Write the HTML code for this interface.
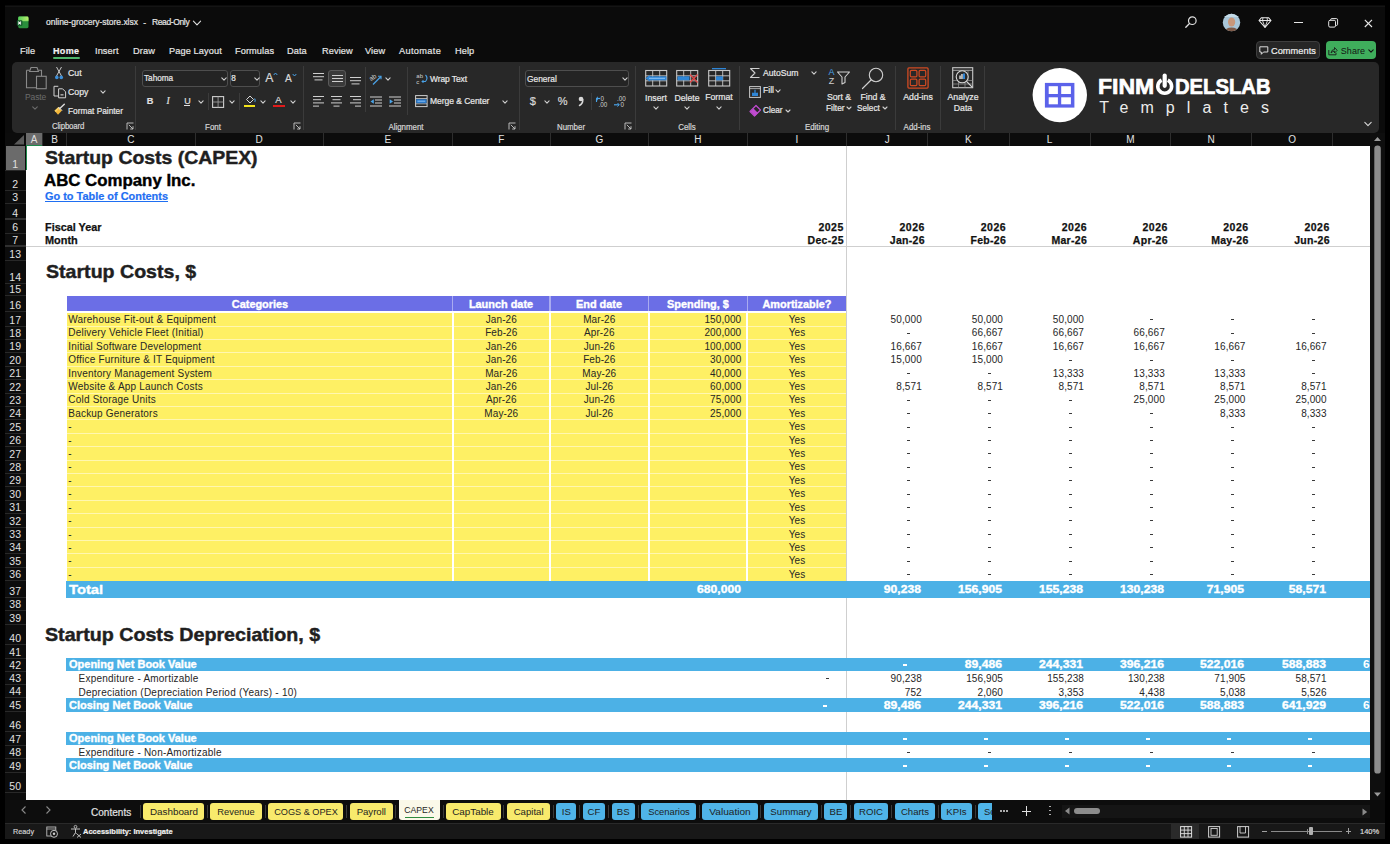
<!DOCTYPE html>
<html><head><meta charset="utf-8"><title>online-grocery-store.xlsx</title>
<style>
html,body{margin:0;padding:0;}
body{width:1390px;height:844px;overflow:hidden;background:#000;position:relative;font-family:"Liberation Sans", sans-serif;}
.t{position:absolute;white-space:nowrap;}
.r{position:absolute;}
.s{position:absolute;overflow:visible;}
</style></head><body>

<div class="r" style="left:5.00px;top:5.00px;width:1380.00px;height:834.00px;background:#0b0b0b;"></div>
<div class="r" style="left:25.50px;top:146.00px;width:1344.50px;height:654.00px;background:#ffffff;"></div>
<div class="r" style="left:25.5px;top:146px;width:1344.5px;height:654px;overflow:hidden;">
<div class="r" style="left:-25.5px;top:-146px;width:1390px;height:844px;">
<div class="r" style="left:846.10px;top:146.00px;width:1.00px;height:654.00px;background:#cfcfcf;"></div>
<div class="t" style="top:149.34px;font-size:18.5px;line-height:18.5px;color:#1f1f1f;transform:scaleX(1.0499);transform-origin:left center;font-weight:700;left:44.90px;-webkit-text-stroke:0.45px #1f1f1f;">Startup Costs (CAPEX)</div>
<div class="t" style="top:172.43px;font-size:16.5px;line-height:16.5px;color:#000;transform:scaleX(1.0193);transform-origin:left center;font-weight:700;left:44.30px;-webkit-text-stroke:0.4px #000;">ABC Company Inc.</div>
<div class="t" style="top:192.25px;font-size:10.1px;line-height:10.1px;color:#1f6ff2;transform:scaleX(1.0824);transform-origin:left center;font-weight:700;left:45.20px;text-decoration:underline;-webkit-text-stroke:0.2px #1f6ff2;">Go to Table of Contents</div>
<div class="t" style="top:221.61px;font-size:10.5px;line-height:10.5px;color:#111;transform:scaleX(1.0331);transform-origin:left center;font-weight:700;left:45.20px;-webkit-text-stroke:0.25px #111;">Fiscal Year</div>
<div class="t" style="top:234.91px;font-size:10.5px;line-height:10.5px;color:#111;transform:scaleX(1.0413);transform-origin:left center;font-weight:700;left:45.20px;-webkit-text-stroke:0.25px #111;">Month</div>
<div class="t" style="top:221.71px;font-size:10.5px;line-height:10.5px;color:#111;font-weight:700;letter-spacing:0.5px;left:443.80px;width:400px;text-align:right;-webkit-text-stroke:0.25px #111;">2025</div>
<div class="t" style="top:234.71px;font-size:10.5px;line-height:10.5px;color:#111;font-weight:700;letter-spacing:0.3px;left:443.80px;width:400px;text-align:right;-webkit-text-stroke:0.25px #111;">Dec-25</div>
<div class="t" style="top:221.71px;font-size:10.5px;line-height:10.5px;color:#111;font-weight:700;letter-spacing:0.5px;left:524.90px;width:400px;text-align:right;-webkit-text-stroke:0.25px #111;">2026</div>
<div class="t" style="top:234.71px;font-size:10.5px;line-height:10.5px;color:#111;font-weight:700;letter-spacing:0.3px;left:524.90px;width:400px;text-align:right;-webkit-text-stroke:0.25px #111;">Jan-26</div>
<div class="t" style="top:221.71px;font-size:10.5px;line-height:10.5px;color:#111;font-weight:700;letter-spacing:0.5px;left:606.10px;width:400px;text-align:right;-webkit-text-stroke:0.25px #111;">2026</div>
<div class="t" style="top:234.71px;font-size:10.5px;line-height:10.5px;color:#111;font-weight:700;letter-spacing:0.3px;left:606.10px;width:400px;text-align:right;-webkit-text-stroke:0.25px #111;">Feb-26</div>
<div class="t" style="top:221.71px;font-size:10.5px;line-height:10.5px;color:#111;font-weight:700;letter-spacing:0.5px;left:687.10px;width:400px;text-align:right;-webkit-text-stroke:0.25px #111;">2026</div>
<div class="t" style="top:234.71px;font-size:10.5px;line-height:10.5px;color:#111;font-weight:700;letter-spacing:0.3px;left:687.10px;width:400px;text-align:right;-webkit-text-stroke:0.25px #111;">Mar-26</div>
<div class="t" style="top:221.71px;font-size:10.5px;line-height:10.5px;color:#111;font-weight:700;letter-spacing:0.5px;left:767.90px;width:400px;text-align:right;-webkit-text-stroke:0.25px #111;">2026</div>
<div class="t" style="top:234.71px;font-size:10.5px;line-height:10.5px;color:#111;font-weight:700;letter-spacing:0.3px;left:767.90px;width:400px;text-align:right;-webkit-text-stroke:0.25px #111;">Apr-26</div>
<div class="t" style="top:221.71px;font-size:10.5px;line-height:10.5px;color:#111;font-weight:700;letter-spacing:0.5px;left:848.60px;width:400px;text-align:right;-webkit-text-stroke:0.25px #111;">2026</div>
<div class="t" style="top:234.71px;font-size:10.5px;line-height:10.5px;color:#111;font-weight:700;letter-spacing:0.3px;left:848.60px;width:400px;text-align:right;-webkit-text-stroke:0.25px #111;">May-26</div>
<div class="t" style="top:221.71px;font-size:10.5px;line-height:10.5px;color:#111;font-weight:700;letter-spacing:0.5px;left:929.80px;width:400px;text-align:right;-webkit-text-stroke:0.25px #111;">2026</div>
<div class="t" style="top:234.71px;font-size:10.5px;line-height:10.5px;color:#111;font-weight:700;letter-spacing:0.3px;left:929.80px;width:400px;text-align:right;-webkit-text-stroke:0.25px #111;">Jun-26</div>
<div class="r" style="left:25.50px;top:246.00px;width:1344.50px;height:1.00px;background:#cfcfcf;"></div>
<div class="t" style="top:262.84px;font-size:18.5px;line-height:18.5px;color:#1f1f1f;transform:scaleX(1.0588);transform-origin:left center;font-weight:700;left:45.80px;-webkit-text-stroke:0.45px #1f1f1f;">Startup Costs, $</div>
<div class="r" style="left:66.50px;top:295.60px;width:779.60px;height:15.10px;background:#6b6ee6;"></div>
<div class="r" style="left:451.90px;top:295.60px;width:1.40px;height:15.10px;background:#a9abf0;"></div>
<div class="r" style="left:549.30px;top:295.60px;width:1.40px;height:15.10px;background:#a9abf0;"></div>
<div class="r" style="left:647.90px;top:295.60px;width:1.40px;height:15.10px;background:#a9abf0;"></div>
<div class="r" style="left:746.60px;top:295.60px;width:1.40px;height:15.10px;background:#a9abf0;"></div>
<div class="r" style="left:66.50px;top:310.70px;width:779.60px;height:2.20px;background:#ffffff;"></div>
<div class="t" style="top:299.67px;font-size:10.2px;line-height:10.2px;color:#fff;transform:scaleX(1.0700);transform-origin:center center;font-weight:700;left:59.55px;width:400px;text-align:center;-webkit-text-stroke:0.35px #fff;">Categories</div>
<div class="t" style="top:299.67px;font-size:10.2px;line-height:10.2px;color:#fff;transform:scaleX(1.0700);transform-origin:center center;font-weight:700;left:301.30px;width:400px;text-align:center;-webkit-text-stroke:0.35px #fff;">Launch date</div>
<div class="t" style="top:299.67px;font-size:10.2px;line-height:10.2px;color:#fff;transform:scaleX(1.0700);transform-origin:center center;font-weight:700;left:399.30px;width:400px;text-align:center;-webkit-text-stroke:0.35px #fff;">End date</div>
<div class="t" style="top:299.67px;font-size:10.2px;line-height:10.2px;color:#fff;transform:scaleX(1.0700);transform-origin:center center;font-weight:700;left:497.95px;width:400px;text-align:center;-webkit-text-stroke:0.35px #fff;">Spending, $</div>
<div class="t" style="top:299.67px;font-size:10.2px;line-height:10.2px;color:#fff;transform:scaleX(1.0700);transform-origin:center center;font-weight:700;left:596.95px;width:400px;text-align:center;-webkit-text-stroke:0.35px #fff;">Amortizable?</div>
<div class="r" style="left:67.20px;top:312.90px;width:778.90px;height:267.90px;background:#fef064;"></div>
<div class="r" style="left:67.20px;top:325.51px;width:778.90px;height:1.00px;background:#fff7b0;"></div>
<div class="r" style="left:67.20px;top:338.92px;width:778.90px;height:1.00px;background:#fff7b0;"></div>
<div class="r" style="left:67.20px;top:352.33px;width:778.90px;height:1.00px;background:#fff7b0;"></div>
<div class="r" style="left:67.20px;top:365.74px;width:778.90px;height:1.00px;background:#fff7b0;"></div>
<div class="r" style="left:67.20px;top:379.15px;width:778.90px;height:1.00px;background:#fff7b0;"></div>
<div class="r" style="left:67.20px;top:392.56px;width:778.90px;height:1.00px;background:#fff7b0;"></div>
<div class="r" style="left:67.20px;top:405.97px;width:778.90px;height:1.00px;background:#fff7b0;"></div>
<div class="r" style="left:67.20px;top:419.38px;width:778.90px;height:1.00px;background:#fff7b0;"></div>
<div class="r" style="left:67.20px;top:432.79px;width:778.90px;height:1.00px;background:#fff7b0;"></div>
<div class="r" style="left:67.20px;top:446.20px;width:778.90px;height:1.00px;background:#fff7b0;"></div>
<div class="r" style="left:67.20px;top:459.61px;width:778.90px;height:1.00px;background:#fff7b0;"></div>
<div class="r" style="left:67.20px;top:473.02px;width:778.90px;height:1.00px;background:#fff7b0;"></div>
<div class="r" style="left:67.20px;top:486.43px;width:778.90px;height:1.00px;background:#fff7b0;"></div>
<div class="r" style="left:67.20px;top:499.84px;width:778.90px;height:1.00px;background:#fff7b0;"></div>
<div class="r" style="left:67.20px;top:513.25px;width:778.90px;height:1.00px;background:#fff7b0;"></div>
<div class="r" style="left:67.20px;top:526.66px;width:778.90px;height:1.00px;background:#fff7b0;"></div>
<div class="r" style="left:67.20px;top:540.07px;width:778.90px;height:1.00px;background:#fff7b0;"></div>
<div class="r" style="left:67.20px;top:553.48px;width:778.90px;height:1.00px;background:#fff7b0;"></div>
<div class="r" style="left:67.20px;top:566.89px;width:778.90px;height:1.00px;background:#fff7b0;"></div>
<div class="r" style="left:451.60px;top:312.90px;width:2.00px;height:267.90px;background:#ffffff;"></div>
<div class="r" style="left:549.00px;top:312.90px;width:2.00px;height:267.90px;background:#ffffff;"></div>
<div class="r" style="left:647.60px;top:312.90px;width:2.00px;height:267.90px;background:#ffffff;"></div>
<div class="r" style="left:746.30px;top:312.90px;width:2.00px;height:267.90px;background:#ffffff;"></div>
<div class="t" style="top:314.95px;font-size:10px;line-height:10px;color:#262626;letter-spacing:0.2px;left:68.30px;">Warehouse Fit-out &amp; Equipment</div>
<div class="t" style="top:314.95px;font-size:10px;line-height:10px;color:#262626;letter-spacing:0.1px;left:301.30px;width:400px;text-align:center;">Jan-26</div>
<div class="t" style="top:314.95px;font-size:10px;line-height:10px;color:#262626;letter-spacing:0.1px;left:399.30px;width:400px;text-align:center;">Mar-26</div>
<div class="t" style="top:314.95px;font-size:10px;line-height:10px;color:#262626;letter-spacing:0.1px;left:341.30px;width:400px;text-align:right;">150,000</div>
<div class="t" style="top:314.95px;font-size:10px;line-height:10px;color:#262626;letter-spacing:0.1px;left:596.95px;width:400px;text-align:center;">Yes</div>
<div class="t" style="top:314.95px;font-size:10px;line-height:10px;color:#262626;letter-spacing:0.1px;left:521.80px;width:400px;text-align:right;">50,000</div>
<div class="t" style="top:314.95px;font-size:10px;line-height:10px;color:#262626;letter-spacing:0.1px;left:603.00px;width:400px;text-align:right;">50,000</div>
<div class="t" style="top:314.95px;font-size:10px;line-height:10px;color:#262626;letter-spacing:0.1px;left:684.00px;width:400px;text-align:right;">50,000</div>
<div class="r" style="left:1150.00px;top:319.00px;width:3.00px;height:1.00px;background:#3a3a3a;"></div>
<div class="r" style="left:1231.00px;top:319.00px;width:3.00px;height:1.00px;background:#3a3a3a;"></div>
<div class="r" style="left:1312.00px;top:319.00px;width:3.00px;height:1.00px;background:#3a3a3a;"></div>
<div class="t" style="top:328.36px;font-size:10px;line-height:10px;color:#262626;letter-spacing:0.2px;left:68.30px;">Delivery Vehicle Fleet (Initial)</div>
<div class="t" style="top:328.36px;font-size:10px;line-height:10px;color:#262626;letter-spacing:0.1px;left:301.30px;width:400px;text-align:center;">Feb-26</div>
<div class="t" style="top:328.36px;font-size:10px;line-height:10px;color:#262626;letter-spacing:0.1px;left:399.30px;width:400px;text-align:center;">Apr-26</div>
<div class="t" style="top:328.36px;font-size:10px;line-height:10px;color:#262626;letter-spacing:0.1px;left:341.30px;width:400px;text-align:right;">200,000</div>
<div class="t" style="top:328.36px;font-size:10px;line-height:10px;color:#262626;letter-spacing:0.1px;left:596.95px;width:400px;text-align:center;">Yes</div>
<div class="r" style="left:907.00px;top:333.00px;width:3.00px;height:1.00px;background:#3a3a3a;"></div>
<div class="t" style="top:328.36px;font-size:10px;line-height:10px;color:#262626;letter-spacing:0.1px;left:603.00px;width:400px;text-align:right;">66,667</div>
<div class="t" style="top:328.36px;font-size:10px;line-height:10px;color:#262626;letter-spacing:0.1px;left:684.00px;width:400px;text-align:right;">66,667</div>
<div class="t" style="top:328.36px;font-size:10px;line-height:10px;color:#262626;letter-spacing:0.1px;left:764.80px;width:400px;text-align:right;">66,667</div>
<div class="r" style="left:1231.00px;top:333.00px;width:3.00px;height:1.00px;background:#3a3a3a;"></div>
<div class="r" style="left:1312.00px;top:333.00px;width:3.00px;height:1.00px;background:#3a3a3a;"></div>
<div class="t" style="top:341.77px;font-size:10px;line-height:10px;color:#262626;letter-spacing:0.2px;left:68.30px;">Initial Software Development</div>
<div class="t" style="top:341.77px;font-size:10px;line-height:10px;color:#262626;letter-spacing:0.1px;left:301.30px;width:400px;text-align:center;">Jan-26</div>
<div class="t" style="top:341.77px;font-size:10px;line-height:10px;color:#262626;letter-spacing:0.1px;left:399.30px;width:400px;text-align:center;">Jun-26</div>
<div class="t" style="top:341.77px;font-size:10px;line-height:10px;color:#262626;letter-spacing:0.1px;left:341.30px;width:400px;text-align:right;">100,000</div>
<div class="t" style="top:341.77px;font-size:10px;line-height:10px;color:#262626;letter-spacing:0.1px;left:596.95px;width:400px;text-align:center;">Yes</div>
<div class="t" style="top:341.77px;font-size:10px;line-height:10px;color:#262626;letter-spacing:0.1px;left:521.80px;width:400px;text-align:right;">16,667</div>
<div class="t" style="top:341.77px;font-size:10px;line-height:10px;color:#262626;letter-spacing:0.1px;left:603.00px;width:400px;text-align:right;">16,667</div>
<div class="t" style="top:341.77px;font-size:10px;line-height:10px;color:#262626;letter-spacing:0.1px;left:684.00px;width:400px;text-align:right;">16,667</div>
<div class="t" style="top:341.77px;font-size:10px;line-height:10px;color:#262626;letter-spacing:0.1px;left:764.80px;width:400px;text-align:right;">16,667</div>
<div class="t" style="top:341.77px;font-size:10px;line-height:10px;color:#262626;letter-spacing:0.1px;left:845.50px;width:400px;text-align:right;">16,667</div>
<div class="t" style="top:341.77px;font-size:10px;line-height:10px;color:#262626;letter-spacing:0.1px;left:926.70px;width:400px;text-align:right;">16,667</div>
<div class="t" style="top:355.18px;font-size:10px;line-height:10px;color:#262626;letter-spacing:0.2px;left:68.30px;">Office Furniture &amp; IT Equipment</div>
<div class="t" style="top:355.18px;font-size:10px;line-height:10px;color:#262626;letter-spacing:0.1px;left:301.30px;width:400px;text-align:center;">Jan-26</div>
<div class="t" style="top:355.18px;font-size:10px;line-height:10px;color:#262626;letter-spacing:0.1px;left:399.30px;width:400px;text-align:center;">Feb-26</div>
<div class="t" style="top:355.18px;font-size:10px;line-height:10px;color:#262626;letter-spacing:0.1px;left:341.30px;width:400px;text-align:right;">30,000</div>
<div class="t" style="top:355.18px;font-size:10px;line-height:10px;color:#262626;letter-spacing:0.1px;left:596.95px;width:400px;text-align:center;">Yes</div>
<div class="t" style="top:355.18px;font-size:10px;line-height:10px;color:#262626;letter-spacing:0.1px;left:521.80px;width:400px;text-align:right;">15,000</div>
<div class="t" style="top:355.18px;font-size:10px;line-height:10px;color:#262626;letter-spacing:0.1px;left:603.00px;width:400px;text-align:right;">15,000</div>
<div class="r" style="left:1069.00px;top:360.00px;width:3.00px;height:1.00px;background:#3a3a3a;"></div>
<div class="r" style="left:1150.00px;top:360.00px;width:3.00px;height:1.00px;background:#3a3a3a;"></div>
<div class="r" style="left:1231.00px;top:360.00px;width:3.00px;height:1.00px;background:#3a3a3a;"></div>
<div class="r" style="left:1312.00px;top:360.00px;width:3.00px;height:1.00px;background:#3a3a3a;"></div>
<div class="t" style="top:368.59px;font-size:10px;line-height:10px;color:#262626;letter-spacing:0.2px;left:68.30px;">Inventory Management System</div>
<div class="t" style="top:368.59px;font-size:10px;line-height:10px;color:#262626;letter-spacing:0.1px;left:301.30px;width:400px;text-align:center;">Mar-26</div>
<div class="t" style="top:368.59px;font-size:10px;line-height:10px;color:#262626;letter-spacing:0.1px;left:399.30px;width:400px;text-align:center;">May-26</div>
<div class="t" style="top:368.59px;font-size:10px;line-height:10px;color:#262626;letter-spacing:0.1px;left:341.30px;width:400px;text-align:right;">40,000</div>
<div class="t" style="top:368.59px;font-size:10px;line-height:10px;color:#262626;letter-spacing:0.1px;left:596.95px;width:400px;text-align:center;">Yes</div>
<div class="r" style="left:907.00px;top:373.00px;width:3.00px;height:1.00px;background:#3a3a3a;"></div>
<div class="r" style="left:988.00px;top:373.00px;width:3.00px;height:1.00px;background:#3a3a3a;"></div>
<div class="t" style="top:368.59px;font-size:10px;line-height:10px;color:#262626;letter-spacing:0.1px;left:684.00px;width:400px;text-align:right;">13,333</div>
<div class="t" style="top:368.59px;font-size:10px;line-height:10px;color:#262626;letter-spacing:0.1px;left:764.80px;width:400px;text-align:right;">13,333</div>
<div class="t" style="top:368.59px;font-size:10px;line-height:10px;color:#262626;letter-spacing:0.1px;left:845.50px;width:400px;text-align:right;">13,333</div>
<div class="r" style="left:1312.00px;top:373.00px;width:3.00px;height:1.00px;background:#3a3a3a;"></div>
<div class="t" style="top:382.00px;font-size:10px;line-height:10px;color:#262626;letter-spacing:0.2px;left:68.30px;">Website &amp; App Launch Costs</div>
<div class="t" style="top:382.00px;font-size:10px;line-height:10px;color:#262626;letter-spacing:0.1px;left:301.30px;width:400px;text-align:center;">Jan-26</div>
<div class="t" style="top:382.00px;font-size:10px;line-height:10px;color:#262626;letter-spacing:0.1px;left:399.30px;width:400px;text-align:center;">Jul-26</div>
<div class="t" style="top:382.00px;font-size:10px;line-height:10px;color:#262626;letter-spacing:0.1px;left:341.30px;width:400px;text-align:right;">60,000</div>
<div class="t" style="top:382.00px;font-size:10px;line-height:10px;color:#262626;letter-spacing:0.1px;left:596.95px;width:400px;text-align:center;">Yes</div>
<div class="t" style="top:382.00px;font-size:10px;line-height:10px;color:#262626;letter-spacing:0.1px;left:521.80px;width:400px;text-align:right;">8,571</div>
<div class="t" style="top:382.00px;font-size:10px;line-height:10px;color:#262626;letter-spacing:0.1px;left:603.00px;width:400px;text-align:right;">8,571</div>
<div class="t" style="top:382.00px;font-size:10px;line-height:10px;color:#262626;letter-spacing:0.1px;left:684.00px;width:400px;text-align:right;">8,571</div>
<div class="t" style="top:382.00px;font-size:10px;line-height:10px;color:#262626;letter-spacing:0.1px;left:764.80px;width:400px;text-align:right;">8,571</div>
<div class="t" style="top:382.00px;font-size:10px;line-height:10px;color:#262626;letter-spacing:0.1px;left:845.50px;width:400px;text-align:right;">8,571</div>
<div class="t" style="top:382.00px;font-size:10px;line-height:10px;color:#262626;letter-spacing:0.1px;left:926.70px;width:400px;text-align:right;">8,571</div>
<div class="t" style="top:395.41px;font-size:10px;line-height:10px;color:#262626;letter-spacing:0.2px;left:68.30px;">Cold Storage Units</div>
<div class="t" style="top:395.41px;font-size:10px;line-height:10px;color:#262626;letter-spacing:0.1px;left:301.30px;width:400px;text-align:center;">Apr-26</div>
<div class="t" style="top:395.41px;font-size:10px;line-height:10px;color:#262626;letter-spacing:0.1px;left:399.30px;width:400px;text-align:center;">Jun-26</div>
<div class="t" style="top:395.41px;font-size:10px;line-height:10px;color:#262626;letter-spacing:0.1px;left:341.30px;width:400px;text-align:right;">75,000</div>
<div class="t" style="top:395.41px;font-size:10px;line-height:10px;color:#262626;letter-spacing:0.1px;left:596.95px;width:400px;text-align:center;">Yes</div>
<div class="r" style="left:907.00px;top:400.00px;width:3.00px;height:1.00px;background:#3a3a3a;"></div>
<div class="r" style="left:988.00px;top:400.00px;width:3.00px;height:1.00px;background:#3a3a3a;"></div>
<div class="r" style="left:1069.00px;top:400.00px;width:3.00px;height:1.00px;background:#3a3a3a;"></div>
<div class="t" style="top:395.41px;font-size:10px;line-height:10px;color:#262626;letter-spacing:0.1px;left:764.80px;width:400px;text-align:right;">25,000</div>
<div class="t" style="top:395.41px;font-size:10px;line-height:10px;color:#262626;letter-spacing:0.1px;left:845.50px;width:400px;text-align:right;">25,000</div>
<div class="t" style="top:395.41px;font-size:10px;line-height:10px;color:#262626;letter-spacing:0.1px;left:926.70px;width:400px;text-align:right;">25,000</div>
<div class="t" style="top:408.81px;font-size:10px;line-height:10px;color:#262626;letter-spacing:0.2px;left:68.30px;">Backup Generators</div>
<div class="t" style="top:408.81px;font-size:10px;line-height:10px;color:#262626;letter-spacing:0.1px;left:301.30px;width:400px;text-align:center;">May-26</div>
<div class="t" style="top:408.81px;font-size:10px;line-height:10px;color:#262626;letter-spacing:0.1px;left:399.30px;width:400px;text-align:center;">Jul-26</div>
<div class="t" style="top:408.81px;font-size:10px;line-height:10px;color:#262626;letter-spacing:0.1px;left:341.30px;width:400px;text-align:right;">25,000</div>
<div class="t" style="top:408.81px;font-size:10px;line-height:10px;color:#262626;letter-spacing:0.1px;left:596.95px;width:400px;text-align:center;">Yes</div>
<div class="r" style="left:907.00px;top:413.00px;width:3.00px;height:1.00px;background:#3a3a3a;"></div>
<div class="r" style="left:988.00px;top:413.00px;width:3.00px;height:1.00px;background:#3a3a3a;"></div>
<div class="r" style="left:1069.00px;top:413.00px;width:3.00px;height:1.00px;background:#3a3a3a;"></div>
<div class="r" style="left:1150.00px;top:413.00px;width:3.00px;height:1.00px;background:#3a3a3a;"></div>
<div class="t" style="top:408.81px;font-size:10px;line-height:10px;color:#262626;letter-spacing:0.1px;left:845.50px;width:400px;text-align:right;">8,333</div>
<div class="t" style="top:408.81px;font-size:10px;line-height:10px;color:#262626;letter-spacing:0.1px;left:926.70px;width:400px;text-align:right;">8,333</div>
<div class="t" style="top:422.23px;font-size:10px;line-height:10px;color:#262626;letter-spacing:0.2px;left:68.30px;">-</div>
<div class="t" style="top:422.23px;font-size:10px;line-height:10px;color:#262626;letter-spacing:0.1px;left:596.95px;width:400px;text-align:center;">Yes</div>
<div class="r" style="left:907.00px;top:427.00px;width:3.00px;height:1.00px;background:#3a3a3a;"></div>
<div class="r" style="left:988.00px;top:427.00px;width:3.00px;height:1.00px;background:#3a3a3a;"></div>
<div class="r" style="left:1069.00px;top:427.00px;width:3.00px;height:1.00px;background:#3a3a3a;"></div>
<div class="r" style="left:1150.00px;top:427.00px;width:3.00px;height:1.00px;background:#3a3a3a;"></div>
<div class="r" style="left:1231.00px;top:427.00px;width:3.00px;height:1.00px;background:#3a3a3a;"></div>
<div class="r" style="left:1312.00px;top:427.00px;width:3.00px;height:1.00px;background:#3a3a3a;"></div>
<div class="t" style="top:435.64px;font-size:10px;line-height:10px;color:#262626;letter-spacing:0.2px;left:68.30px;">-</div>
<div class="t" style="top:435.64px;font-size:10px;line-height:10px;color:#262626;letter-spacing:0.1px;left:596.95px;width:400px;text-align:center;">Yes</div>
<div class="r" style="left:907.00px;top:440.00px;width:3.00px;height:1.00px;background:#3a3a3a;"></div>
<div class="r" style="left:988.00px;top:440.00px;width:3.00px;height:1.00px;background:#3a3a3a;"></div>
<div class="r" style="left:1069.00px;top:440.00px;width:3.00px;height:1.00px;background:#3a3a3a;"></div>
<div class="r" style="left:1150.00px;top:440.00px;width:3.00px;height:1.00px;background:#3a3a3a;"></div>
<div class="r" style="left:1231.00px;top:440.00px;width:3.00px;height:1.00px;background:#3a3a3a;"></div>
<div class="r" style="left:1312.00px;top:440.00px;width:3.00px;height:1.00px;background:#3a3a3a;"></div>
<div class="t" style="top:449.05px;font-size:10px;line-height:10px;color:#262626;letter-spacing:0.2px;left:68.30px;">-</div>
<div class="t" style="top:449.05px;font-size:10px;line-height:10px;color:#262626;letter-spacing:0.1px;left:596.95px;width:400px;text-align:center;">Yes</div>
<div class="r" style="left:907.00px;top:453.00px;width:3.00px;height:1.00px;background:#3a3a3a;"></div>
<div class="r" style="left:988.00px;top:453.00px;width:3.00px;height:1.00px;background:#3a3a3a;"></div>
<div class="r" style="left:1069.00px;top:453.00px;width:3.00px;height:1.00px;background:#3a3a3a;"></div>
<div class="r" style="left:1150.00px;top:453.00px;width:3.00px;height:1.00px;background:#3a3a3a;"></div>
<div class="r" style="left:1231.00px;top:453.00px;width:3.00px;height:1.00px;background:#3a3a3a;"></div>
<div class="r" style="left:1312.00px;top:453.00px;width:3.00px;height:1.00px;background:#3a3a3a;"></div>
<div class="t" style="top:462.46px;font-size:10px;line-height:10px;color:#262626;letter-spacing:0.2px;left:68.30px;">-</div>
<div class="t" style="top:462.46px;font-size:10px;line-height:10px;color:#262626;letter-spacing:0.1px;left:596.95px;width:400px;text-align:center;">Yes</div>
<div class="r" style="left:907.00px;top:467.00px;width:3.00px;height:1.00px;background:#3a3a3a;"></div>
<div class="r" style="left:988.00px;top:467.00px;width:3.00px;height:1.00px;background:#3a3a3a;"></div>
<div class="r" style="left:1069.00px;top:467.00px;width:3.00px;height:1.00px;background:#3a3a3a;"></div>
<div class="r" style="left:1150.00px;top:467.00px;width:3.00px;height:1.00px;background:#3a3a3a;"></div>
<div class="r" style="left:1231.00px;top:467.00px;width:3.00px;height:1.00px;background:#3a3a3a;"></div>
<div class="r" style="left:1312.00px;top:467.00px;width:3.00px;height:1.00px;background:#3a3a3a;"></div>
<div class="t" style="top:475.87px;font-size:10px;line-height:10px;color:#262626;letter-spacing:0.2px;left:68.30px;">-</div>
<div class="t" style="top:475.87px;font-size:10px;line-height:10px;color:#262626;letter-spacing:0.1px;left:596.95px;width:400px;text-align:center;">Yes</div>
<div class="r" style="left:907.00px;top:480.00px;width:3.00px;height:1.00px;background:#3a3a3a;"></div>
<div class="r" style="left:988.00px;top:480.00px;width:3.00px;height:1.00px;background:#3a3a3a;"></div>
<div class="r" style="left:1069.00px;top:480.00px;width:3.00px;height:1.00px;background:#3a3a3a;"></div>
<div class="r" style="left:1150.00px;top:480.00px;width:3.00px;height:1.00px;background:#3a3a3a;"></div>
<div class="r" style="left:1231.00px;top:480.00px;width:3.00px;height:1.00px;background:#3a3a3a;"></div>
<div class="r" style="left:1312.00px;top:480.00px;width:3.00px;height:1.00px;background:#3a3a3a;"></div>
<div class="t" style="top:489.28px;font-size:10px;line-height:10px;color:#262626;letter-spacing:0.2px;left:68.30px;">-</div>
<div class="t" style="top:489.28px;font-size:10px;line-height:10px;color:#262626;letter-spacing:0.1px;left:596.95px;width:400px;text-align:center;">Yes</div>
<div class="r" style="left:907.00px;top:494.00px;width:3.00px;height:1.00px;background:#3a3a3a;"></div>
<div class="r" style="left:988.00px;top:494.00px;width:3.00px;height:1.00px;background:#3a3a3a;"></div>
<div class="r" style="left:1069.00px;top:494.00px;width:3.00px;height:1.00px;background:#3a3a3a;"></div>
<div class="r" style="left:1150.00px;top:494.00px;width:3.00px;height:1.00px;background:#3a3a3a;"></div>
<div class="r" style="left:1231.00px;top:494.00px;width:3.00px;height:1.00px;background:#3a3a3a;"></div>
<div class="r" style="left:1312.00px;top:494.00px;width:3.00px;height:1.00px;background:#3a3a3a;"></div>
<div class="t" style="top:502.69px;font-size:10px;line-height:10px;color:#262626;letter-spacing:0.2px;left:68.30px;">-</div>
<div class="t" style="top:502.69px;font-size:10px;line-height:10px;color:#262626;letter-spacing:0.1px;left:596.95px;width:400px;text-align:center;">Yes</div>
<div class="r" style="left:907.00px;top:507.00px;width:3.00px;height:1.00px;background:#3a3a3a;"></div>
<div class="r" style="left:988.00px;top:507.00px;width:3.00px;height:1.00px;background:#3a3a3a;"></div>
<div class="r" style="left:1069.00px;top:507.00px;width:3.00px;height:1.00px;background:#3a3a3a;"></div>
<div class="r" style="left:1150.00px;top:507.00px;width:3.00px;height:1.00px;background:#3a3a3a;"></div>
<div class="r" style="left:1231.00px;top:507.00px;width:3.00px;height:1.00px;background:#3a3a3a;"></div>
<div class="r" style="left:1312.00px;top:507.00px;width:3.00px;height:1.00px;background:#3a3a3a;"></div>
<div class="t" style="top:516.10px;font-size:10px;line-height:10px;color:#262626;letter-spacing:0.2px;left:68.30px;">-</div>
<div class="t" style="top:516.10px;font-size:10px;line-height:10px;color:#262626;letter-spacing:0.1px;left:596.95px;width:400px;text-align:center;">Yes</div>
<div class="r" style="left:907.00px;top:520.00px;width:3.00px;height:1.00px;background:#3a3a3a;"></div>
<div class="r" style="left:988.00px;top:520.00px;width:3.00px;height:1.00px;background:#3a3a3a;"></div>
<div class="r" style="left:1069.00px;top:520.00px;width:3.00px;height:1.00px;background:#3a3a3a;"></div>
<div class="r" style="left:1150.00px;top:520.00px;width:3.00px;height:1.00px;background:#3a3a3a;"></div>
<div class="r" style="left:1231.00px;top:520.00px;width:3.00px;height:1.00px;background:#3a3a3a;"></div>
<div class="r" style="left:1312.00px;top:520.00px;width:3.00px;height:1.00px;background:#3a3a3a;"></div>
<div class="t" style="top:529.50px;font-size:10px;line-height:10px;color:#262626;letter-spacing:0.2px;left:68.30px;">-</div>
<div class="t" style="top:529.50px;font-size:10px;line-height:10px;color:#262626;letter-spacing:0.1px;left:596.95px;width:400px;text-align:center;">Yes</div>
<div class="r" style="left:907.00px;top:534.00px;width:3.00px;height:1.00px;background:#3a3a3a;"></div>
<div class="r" style="left:988.00px;top:534.00px;width:3.00px;height:1.00px;background:#3a3a3a;"></div>
<div class="r" style="left:1069.00px;top:534.00px;width:3.00px;height:1.00px;background:#3a3a3a;"></div>
<div class="r" style="left:1150.00px;top:534.00px;width:3.00px;height:1.00px;background:#3a3a3a;"></div>
<div class="r" style="left:1231.00px;top:534.00px;width:3.00px;height:1.00px;background:#3a3a3a;"></div>
<div class="r" style="left:1312.00px;top:534.00px;width:3.00px;height:1.00px;background:#3a3a3a;"></div>
<div class="t" style="top:542.91px;font-size:10px;line-height:10px;color:#262626;letter-spacing:0.2px;left:68.30px;">-</div>
<div class="t" style="top:542.91px;font-size:10px;line-height:10px;color:#262626;letter-spacing:0.1px;left:596.95px;width:400px;text-align:center;">Yes</div>
<div class="r" style="left:907.00px;top:547.00px;width:3.00px;height:1.00px;background:#3a3a3a;"></div>
<div class="r" style="left:988.00px;top:547.00px;width:3.00px;height:1.00px;background:#3a3a3a;"></div>
<div class="r" style="left:1069.00px;top:547.00px;width:3.00px;height:1.00px;background:#3a3a3a;"></div>
<div class="r" style="left:1150.00px;top:547.00px;width:3.00px;height:1.00px;background:#3a3a3a;"></div>
<div class="r" style="left:1231.00px;top:547.00px;width:3.00px;height:1.00px;background:#3a3a3a;"></div>
<div class="r" style="left:1312.00px;top:547.00px;width:3.00px;height:1.00px;background:#3a3a3a;"></div>
<div class="t" style="top:556.32px;font-size:10px;line-height:10px;color:#262626;letter-spacing:0.2px;left:68.30px;">-</div>
<div class="t" style="top:556.32px;font-size:10px;line-height:10px;color:#262626;letter-spacing:0.1px;left:596.95px;width:400px;text-align:center;">Yes</div>
<div class="r" style="left:907.00px;top:561.00px;width:3.00px;height:1.00px;background:#3a3a3a;"></div>
<div class="r" style="left:988.00px;top:561.00px;width:3.00px;height:1.00px;background:#3a3a3a;"></div>
<div class="r" style="left:1069.00px;top:561.00px;width:3.00px;height:1.00px;background:#3a3a3a;"></div>
<div class="r" style="left:1150.00px;top:561.00px;width:3.00px;height:1.00px;background:#3a3a3a;"></div>
<div class="r" style="left:1231.00px;top:561.00px;width:3.00px;height:1.00px;background:#3a3a3a;"></div>
<div class="r" style="left:1312.00px;top:561.00px;width:3.00px;height:1.00px;background:#3a3a3a;"></div>
<div class="t" style="top:569.73px;font-size:10px;line-height:10px;color:#262626;letter-spacing:0.2px;left:68.30px;">-</div>
<div class="t" style="top:569.73px;font-size:10px;line-height:10px;color:#262626;letter-spacing:0.1px;left:596.95px;width:400px;text-align:center;">Yes</div>
<div class="r" style="left:907.00px;top:574.00px;width:3.00px;height:1.00px;background:#3a3a3a;"></div>
<div class="r" style="left:988.00px;top:574.00px;width:3.00px;height:1.00px;background:#3a3a3a;"></div>
<div class="r" style="left:1069.00px;top:574.00px;width:3.00px;height:1.00px;background:#3a3a3a;"></div>
<div class="r" style="left:1150.00px;top:574.00px;width:3.00px;height:1.00px;background:#3a3a3a;"></div>
<div class="r" style="left:1231.00px;top:574.00px;width:3.00px;height:1.00px;background:#3a3a3a;"></div>
<div class="r" style="left:1312.00px;top:574.00px;width:3.00px;height:1.00px;background:#3a3a3a;"></div>
<div class="r" style="left:66.00px;top:580.80px;width:1304.00px;height:17.00px;background:#4cb1e6;"></div>
<div class="t" style="top:582.79px;font-size:13.6px;line-height:13.6px;color:#fff;transform:scaleX(1.0868);transform-origin:left center;font-weight:700;left:68.90px;-webkit-text-stroke:0.35px #fff;">Total</div>
<div class="t" style="top:584.68px;font-size:10.3px;line-height:10.3px;color:#fff;transform:scaleX(1.1800);transform-origin:right center;font-weight:700;left:340.90px;width:400px;text-align:right;-webkit-text-stroke:0.35px #fff;">680,000</div>
<div class="t" style="top:584.68px;font-size:10.3px;line-height:10.3px;color:#fff;transform:scaleX(1.1800);transform-origin:right center;font-weight:700;left:520.70px;width:400px;text-align:right;-webkit-text-stroke:0.35px #fff;">90,238</div>
<div class="t" style="top:584.68px;font-size:10.3px;line-height:10.3px;color:#fff;transform:scaleX(1.1800);transform-origin:right center;font-weight:700;left:601.90px;width:400px;text-align:right;-webkit-text-stroke:0.35px #fff;">156,905</div>
<div class="t" style="top:584.68px;font-size:10.3px;line-height:10.3px;color:#fff;transform:scaleX(1.1800);transform-origin:right center;font-weight:700;left:682.90px;width:400px;text-align:right;-webkit-text-stroke:0.35px #fff;">155,238</div>
<div class="t" style="top:584.68px;font-size:10.3px;line-height:10.3px;color:#fff;transform:scaleX(1.1800);transform-origin:right center;font-weight:700;left:763.70px;width:400px;text-align:right;-webkit-text-stroke:0.35px #fff;">130,238</div>
<div class="t" style="top:584.68px;font-size:10.3px;line-height:10.3px;color:#fff;transform:scaleX(1.1800);transform-origin:right center;font-weight:700;left:844.40px;width:400px;text-align:right;-webkit-text-stroke:0.35px #fff;">71,905</div>
<div class="t" style="top:584.68px;font-size:10.3px;line-height:10.3px;color:#fff;transform:scaleX(1.1800);transform-origin:right center;font-weight:700;left:925.60px;width:400px;text-align:right;-webkit-text-stroke:0.35px #fff;">58,571</div>
<div class="t" style="top:626.24px;font-size:18.5px;line-height:18.5px;color:#1f1f1f;transform:scaleX(1.0623);transform-origin:left center;font-weight:700;left:45.40px;-webkit-text-stroke:0.45px #1f1f1f;">Startup Costs Depreciation, $</div>
<div class="r" style="left:66.30px;top:658.00px;width:1303.70px;height:13.20px;background:#4cb1e6;"></div>
<div class="t" style="top:660.44px;font-size:10px;line-height:10px;color:#fff;transform:scaleX(1.1000);transform-origin:left center;font-weight:700;left:68.90px;-webkit-text-stroke:0.35px #fff;">Opening Net Book Value</div>
<div class="r" style="left:903.00px;top:664.00px;width:4.00px;height:1.60px;background:#fff;"></div>
<div class="t" style="top:660.18px;font-size:10.3px;line-height:10.3px;color:#fff;transform:scaleX(1.1800);transform-origin:right center;font-weight:700;left:601.90px;width:400px;text-align:right;-webkit-text-stroke:0.35px #fff;">89,486</div>
<div class="t" style="top:660.18px;font-size:10.3px;line-height:10.3px;color:#fff;transform:scaleX(1.1800);transform-origin:right center;font-weight:700;left:682.90px;width:400px;text-align:right;-webkit-text-stroke:0.35px #fff;">244,331</div>
<div class="t" style="top:660.18px;font-size:10.3px;line-height:10.3px;color:#fff;transform:scaleX(1.1800);transform-origin:right center;font-weight:700;left:763.70px;width:400px;text-align:right;-webkit-text-stroke:0.35px #fff;">396,216</div>
<div class="t" style="top:660.18px;font-size:10.3px;line-height:10.3px;color:#fff;transform:scaleX(1.1800);transform-origin:right center;font-weight:700;left:844.40px;width:400px;text-align:right;-webkit-text-stroke:0.35px #fff;">522,016</div>
<div class="t" style="top:660.18px;font-size:10.3px;line-height:10.3px;color:#fff;transform:scaleX(1.1800);transform-origin:right center;font-weight:700;left:925.60px;width:400px;text-align:right;-webkit-text-stroke:0.35px #fff;">588,883</div>
<div class="t" style="top:660.18px;font-size:10.3px;line-height:10.3px;color:#fff;transform:scaleX(1.1600);transform-origin:left center;font-weight:700;left:1362.60px;">6</div>
<div class="t" style="top:674.23px;font-size:10px;line-height:10px;color:#262626;letter-spacing:0.22px;left:78.60px;">Expenditure - Amortizable</div>
<div class="r" style="left:826.00px;top:678.00px;width:3.00px;height:1.00px;background:#3a3a3a;"></div>
<div class="t" style="top:674.23px;font-size:10px;line-height:10px;color:#262626;letter-spacing:0.1px;left:521.80px;width:400px;text-align:right;">90,238</div>
<div class="t" style="top:674.23px;font-size:10px;line-height:10px;color:#262626;letter-spacing:0.1px;left:603.00px;width:400px;text-align:right;">156,905</div>
<div class="t" style="top:674.23px;font-size:10px;line-height:10px;color:#262626;letter-spacing:0.1px;left:684.00px;width:400px;text-align:right;">155,238</div>
<div class="t" style="top:674.23px;font-size:10px;line-height:10px;color:#262626;letter-spacing:0.1px;left:764.80px;width:400px;text-align:right;">130,238</div>
<div class="t" style="top:674.23px;font-size:10px;line-height:10px;color:#262626;letter-spacing:0.1px;left:845.50px;width:400px;text-align:right;">71,905</div>
<div class="t" style="top:674.23px;font-size:10px;line-height:10px;color:#262626;letter-spacing:0.1px;left:926.70px;width:400px;text-align:right;">58,571</div>
<div class="t" style="top:687.63px;font-size:10px;line-height:10px;color:#262626;letter-spacing:0.22px;left:78.60px;">Depreciation (Depreciation Period (Years) - 10)</div>
<div class="t" style="top:687.63px;font-size:10px;line-height:10px;color:#262626;letter-spacing:0.1px;left:521.80px;width:400px;text-align:right;">752</div>
<div class="t" style="top:687.63px;font-size:10px;line-height:10px;color:#262626;letter-spacing:0.1px;left:603.00px;width:400px;text-align:right;">2,060</div>
<div class="t" style="top:687.63px;font-size:10px;line-height:10px;color:#262626;letter-spacing:0.1px;left:684.00px;width:400px;text-align:right;">3,353</div>
<div class="t" style="top:687.63px;font-size:10px;line-height:10px;color:#262626;letter-spacing:0.1px;left:764.80px;width:400px;text-align:right;">4,438</div>
<div class="t" style="top:687.63px;font-size:10px;line-height:10px;color:#262626;letter-spacing:0.1px;left:845.50px;width:400px;text-align:right;">5,038</div>
<div class="t" style="top:687.63px;font-size:10px;line-height:10px;color:#262626;letter-spacing:0.1px;left:926.70px;width:400px;text-align:right;">5,526</div>
<div class="r" style="left:66.30px;top:697.80px;width:1303.70px;height:13.80px;background:#4cb1e6;"></div>
<div class="t" style="top:700.84px;font-size:10px;line-height:10px;color:#fff;transform:scaleX(1.1000);transform-origin:left center;font-weight:700;left:68.90px;-webkit-text-stroke:0.35px #fff;">Closing Net Book Value</div>
<div class="r" style="left:823.00px;top:705.00px;width:4.00px;height:1.60px;background:#fff;"></div>
<div class="t" style="top:700.58px;font-size:10.3px;line-height:10.3px;color:#fff;transform:scaleX(1.1800);transform-origin:right center;font-weight:700;left:520.70px;width:400px;text-align:right;-webkit-text-stroke:0.35px #fff;">89,486</div>
<div class="t" style="top:700.58px;font-size:10.3px;line-height:10.3px;color:#fff;transform:scaleX(1.1800);transform-origin:right center;font-weight:700;left:601.90px;width:400px;text-align:right;-webkit-text-stroke:0.35px #fff;">244,331</div>
<div class="t" style="top:700.58px;font-size:10.3px;line-height:10.3px;color:#fff;transform:scaleX(1.1800);transform-origin:right center;font-weight:700;left:682.90px;width:400px;text-align:right;-webkit-text-stroke:0.35px #fff;">396,216</div>
<div class="t" style="top:700.58px;font-size:10.3px;line-height:10.3px;color:#fff;transform:scaleX(1.1800);transform-origin:right center;font-weight:700;left:763.70px;width:400px;text-align:right;-webkit-text-stroke:0.35px #fff;">522,016</div>
<div class="t" style="top:700.58px;font-size:10.3px;line-height:10.3px;color:#fff;transform:scaleX(1.1800);transform-origin:right center;font-weight:700;left:844.40px;width:400px;text-align:right;-webkit-text-stroke:0.35px #fff;">588,883</div>
<div class="t" style="top:700.58px;font-size:10.3px;line-height:10.3px;color:#fff;transform:scaleX(1.1800);transform-origin:right center;font-weight:700;left:925.60px;width:400px;text-align:right;-webkit-text-stroke:0.35px #fff;">641,929</div>
<div class="t" style="top:700.58px;font-size:10.3px;line-height:10.3px;color:#fff;transform:scaleX(1.1600);transform-origin:left center;font-weight:700;left:1362.60px;">6</div>
<div class="r" style="left:66.30px;top:731.60px;width:1303.70px;height:13.40px;background:#4cb1e6;"></div>
<div class="t" style="top:734.24px;font-size:10px;line-height:10px;color:#fff;transform:scaleX(1.1000);transform-origin:left center;font-weight:700;left:68.90px;-webkit-text-stroke:0.35px #fff;">Opening Net Book Value</div>
<div class="r" style="left:903.00px;top:738.00px;width:4.00px;height:1.60px;background:#fff;"></div>
<div class="r" style="left:984.00px;top:738.00px;width:4.00px;height:1.60px;background:#fff;"></div>
<div class="r" style="left:1065.00px;top:738.00px;width:4.00px;height:1.60px;background:#fff;"></div>
<div class="r" style="left:1146.00px;top:738.00px;width:4.00px;height:1.60px;background:#fff;"></div>
<div class="r" style="left:1227.00px;top:738.00px;width:4.00px;height:1.60px;background:#fff;"></div>
<div class="r" style="left:1308.00px;top:738.00px;width:4.00px;height:1.60px;background:#fff;"></div>
<div class="t" style="top:748.03px;font-size:10px;line-height:10px;color:#262626;letter-spacing:0.22px;left:78.60px;">Expenditure - Non-Amortizable</div>
<div class="r" style="left:907.00px;top:752.00px;width:3.00px;height:1.00px;background:#3a3a3a;"></div>
<div class="r" style="left:988.00px;top:752.00px;width:3.00px;height:1.00px;background:#3a3a3a;"></div>
<div class="r" style="left:1069.00px;top:752.00px;width:3.00px;height:1.00px;background:#3a3a3a;"></div>
<div class="r" style="left:1150.00px;top:752.00px;width:3.00px;height:1.00px;background:#3a3a3a;"></div>
<div class="r" style="left:1231.00px;top:752.00px;width:3.00px;height:1.00px;background:#3a3a3a;"></div>
<div class="r" style="left:1312.00px;top:752.00px;width:3.00px;height:1.00px;background:#3a3a3a;"></div>
<div class="r" style="left:66.30px;top:758.20px;width:1303.70px;height:13.80px;background:#4cb1e6;"></div>
<div class="t" style="top:761.24px;font-size:10px;line-height:10px;color:#fff;transform:scaleX(1.1000);transform-origin:left center;font-weight:700;left:68.90px;-webkit-text-stroke:0.35px #fff;">Closing Net Book Value</div>
<div class="r" style="left:903.00px;top:765.00px;width:4.00px;height:1.60px;background:#fff;"></div>
<div class="r" style="left:984.00px;top:765.00px;width:4.00px;height:1.60px;background:#fff;"></div>
<div class="r" style="left:1065.00px;top:765.00px;width:4.00px;height:1.60px;background:#fff;"></div>
<div class="r" style="left:1146.00px;top:765.00px;width:4.00px;height:1.60px;background:#fff;"></div>
<div class="r" style="left:1227.00px;top:765.00px;width:4.00px;height:1.60px;background:#fff;"></div>
<div class="r" style="left:1308.00px;top:765.00px;width:4.00px;height:1.60px;background:#fff;"></div>
</div></div>
<div class="r" style="left:25.00px;top:146.00px;width:1.50px;height:24.00px;background:#1f8a4c;"></div>
<div class="r" style="left:5.00px;top:133.00px;width:1365.00px;height:13.00px;background:#0c0c0c;"></div>
<svg class="s" style="left:5px;top:133px" width="21" height="13"><polygon points="19,2 19,11.5 9,11.5" fill="#5a5a5a"/></svg>
<div class="r" style="left:25.50px;top:133.00px;width:17.20px;height:12.30px;background:#6b6b6b;"></div>
<div class="r" style="left:25.50px;top:145.30px;width:17.20px;height:1.20px;background:#1f8a4c;"></div>
<div class="r" style="left:42.20px;top:133.00px;width:1.00px;height:13.00px;background:#2e2e2e;"></div>
<div class="t" style="top:135.13px;font-size:10px;line-height:10px;color:#e0e0e0;left:14.10px;width:40px;text-align:center;">A</div>
<div class="r" style="left:66.00px;top:133.00px;width:1.00px;height:13.00px;background:#2e2e2e;"></div>
<div class="t" style="top:135.13px;font-size:10px;line-height:10px;color:#e0e0e0;left:34.60px;width:40px;text-align:center;">B</div>
<div class="r" style="left:194.90px;top:133.00px;width:1.00px;height:13.00px;background:#2e2e2e;"></div>
<div class="t" style="top:135.13px;font-size:10px;line-height:10px;color:#e0e0e0;left:110.95px;width:40px;text-align:center;">C</div>
<div class="r" style="left:322.50px;top:133.00px;width:1.00px;height:13.00px;background:#2e2e2e;"></div>
<div class="t" style="top:135.13px;font-size:10px;line-height:10px;color:#e0e0e0;left:239.20px;width:40px;text-align:center;">D</div>
<div class="r" style="left:452.10px;top:133.00px;width:1.00px;height:13.00px;background:#2e2e2e;"></div>
<div class="t" style="top:135.13px;font-size:10px;line-height:10px;color:#e0e0e0;left:367.80px;width:40px;text-align:center;">E</div>
<div class="r" style="left:549.50px;top:133.00px;width:1.00px;height:13.00px;background:#2e2e2e;"></div>
<div class="t" style="top:135.13px;font-size:10px;line-height:10px;color:#e0e0e0;left:481.30px;width:40px;text-align:center;">F</div>
<div class="r" style="left:648.10px;top:133.00px;width:1.00px;height:13.00px;background:#2e2e2e;"></div>
<div class="t" style="top:135.13px;font-size:10px;line-height:10px;color:#e0e0e0;left:579.30px;width:40px;text-align:center;">G</div>
<div class="r" style="left:746.80px;top:133.00px;width:1.00px;height:13.00px;background:#2e2e2e;"></div>
<div class="t" style="top:135.13px;font-size:10px;line-height:10px;color:#e0e0e0;left:677.95px;width:40px;text-align:center;">H</div>
<div class="r" style="left:846.10px;top:133.00px;width:1.00px;height:13.00px;background:#2e2e2e;"></div>
<div class="t" style="top:135.13px;font-size:10px;line-height:10px;color:#e0e0e0;left:776.95px;width:40px;text-align:center;">I</div>
<div class="r" style="left:927.30px;top:133.00px;width:1.00px;height:13.00px;background:#2e2e2e;"></div>
<div class="t" style="top:135.13px;font-size:10px;line-height:10px;color:#e0e0e0;left:867.20px;width:40px;text-align:center;">J</div>
<div class="r" style="left:1008.50px;top:133.00px;width:1.00px;height:13.00px;background:#2e2e2e;"></div>
<div class="t" style="top:135.13px;font-size:10px;line-height:10px;color:#e0e0e0;left:948.40px;width:40px;text-align:center;">K</div>
<div class="r" style="left:1089.50px;top:133.00px;width:1.00px;height:13.00px;background:#2e2e2e;"></div>
<div class="t" style="top:135.13px;font-size:10px;line-height:10px;color:#e0e0e0;left:1029.50px;width:40px;text-align:center;">L</div>
<div class="r" style="left:1170.30px;top:133.00px;width:1.00px;height:13.00px;background:#2e2e2e;"></div>
<div class="t" style="top:135.13px;font-size:10px;line-height:10px;color:#e0e0e0;left:1110.40px;width:40px;text-align:center;">M</div>
<div class="r" style="left:1251.00px;top:133.00px;width:1.00px;height:13.00px;background:#2e2e2e;"></div>
<div class="t" style="top:135.13px;font-size:10px;line-height:10px;color:#e0e0e0;left:1191.15px;width:40px;text-align:center;">N</div>
<div class="r" style="left:1332.20px;top:133.00px;width:1.00px;height:13.00px;background:#2e2e2e;"></div>
<div class="t" style="top:135.13px;font-size:10px;line-height:10px;color:#e0e0e0;left:1272.10px;width:40px;text-align:center;">O</div>
<div class="t" style="top:135.13px;font-size:10px;line-height:10px;color:#e0e0e0;left:1353.30px;width:40px;text-align:center;">P</div>
<div class="r" style="left:5.00px;top:146.00px;width:20.50px;height:654.00px;background:#0c0c0c;"></div>
<div class="r" style="left:5.50px;top:146.00px;width:19.50px;height:24.00px;background:#6b6b6b;"></div>
<div class="r" style="left:5.00px;top:169.50px;width:20.50px;height:1.00px;background:#282828;"></div>
<div class="t" style="top:158.51px;font-size:10.5px;line-height:10.5px;color:#e0e0e0;left:5.20px;width:20px;text-align:center;">1</div>
<div class="r" style="left:5.00px;top:189.50px;width:20.50px;height:1.00px;background:#282828;"></div>
<div class="t" style="top:178.51px;font-size:10.5px;line-height:10.5px;color:#e0e0e0;left:5.20px;width:20px;text-align:center;">2</div>
<div class="r" style="left:5.00px;top:203.00px;width:20.50px;height:1.00px;background:#282828;"></div>
<div class="t" style="top:192.01px;font-size:10.5px;line-height:10.5px;color:#e0e0e0;left:5.20px;width:20px;text-align:center;">3</div>
<div class="r" style="left:5.00px;top:218.50px;width:20.50px;height:1.00px;background:#282828;"></div>
<div class="r" style="left:5.00px;top:217.50px;width:20.50px;height:2.00px;background:#303030;"></div>
<div class="t" style="top:207.51px;font-size:10.5px;line-height:10.5px;color:#e0e0e0;left:5.20px;width:20px;text-align:center;">4</div>
<div class="r" style="left:5.00px;top:232.50px;width:20.50px;height:1.00px;background:#282828;"></div>
<div class="t" style="top:221.51px;font-size:10.5px;line-height:10.5px;color:#e0e0e0;left:5.20px;width:20px;text-align:center;">6</div>
<div class="r" style="left:5.00px;top:245.50px;width:20.50px;height:1.00px;background:#282828;"></div>
<div class="r" style="left:5.00px;top:244.50px;width:20.50px;height:2.00px;background:#303030;"></div>
<div class="t" style="top:234.51px;font-size:10.5px;line-height:10.5px;color:#e0e0e0;left:5.20px;width:20px;text-align:center;">7</div>
<div class="r" style="left:5.00px;top:259.50px;width:20.50px;height:1.00px;background:#282828;"></div>
<div class="t" style="top:248.51px;font-size:10.5px;line-height:10.5px;color:#e0e0e0;left:5.20px;width:20px;text-align:center;">13</div>
<div class="r" style="left:5.00px;top:282.50px;width:20.50px;height:1.00px;background:#282828;"></div>
<div class="t" style="top:271.51px;font-size:10.5px;line-height:10.5px;color:#e0e0e0;left:5.20px;width:20px;text-align:center;">14</div>
<div class="r" style="left:5.00px;top:295.00px;width:20.50px;height:1.00px;background:#282828;"></div>
<div class="t" style="top:284.01px;font-size:10.5px;line-height:10.5px;color:#e0e0e0;left:5.20px;width:20px;text-align:center;">15</div>
<div class="r" style="left:5.00px;top:310.50px;width:20.50px;height:1.00px;background:#282828;"></div>
<div class="t" style="top:299.51px;font-size:10.5px;line-height:10.5px;color:#e0e0e0;left:5.20px;width:20px;text-align:center;">16</div>
<div class="r" style="left:5.00px;top:325.51px;width:20.50px;height:1.00px;background:#282828;"></div>
<div class="t" style="top:314.52px;font-size:10.5px;line-height:10.5px;color:#e0e0e0;left:5.20px;width:20px;text-align:center;">17</div>
<div class="r" style="left:5.00px;top:338.92px;width:20.50px;height:1.00px;background:#282828;"></div>
<div class="t" style="top:327.93px;font-size:10.5px;line-height:10.5px;color:#e0e0e0;left:5.20px;width:20px;text-align:center;">18</div>
<div class="r" style="left:5.00px;top:352.33px;width:20.50px;height:1.00px;background:#282828;"></div>
<div class="t" style="top:341.34px;font-size:10.5px;line-height:10.5px;color:#e0e0e0;left:5.20px;width:20px;text-align:center;">19</div>
<div class="r" style="left:5.00px;top:365.74px;width:20.50px;height:1.00px;background:#282828;"></div>
<div class="t" style="top:354.75px;font-size:10.5px;line-height:10.5px;color:#e0e0e0;left:5.20px;width:20px;text-align:center;">20</div>
<div class="r" style="left:5.00px;top:379.15px;width:20.50px;height:1.00px;background:#282828;"></div>
<div class="t" style="top:368.16px;font-size:10.5px;line-height:10.5px;color:#e0e0e0;left:5.20px;width:20px;text-align:center;">21</div>
<div class="r" style="left:5.00px;top:392.56px;width:20.50px;height:1.00px;background:#282828;"></div>
<div class="t" style="top:381.57px;font-size:10.5px;line-height:10.5px;color:#e0e0e0;left:5.20px;width:20px;text-align:center;">22</div>
<div class="r" style="left:5.00px;top:405.97px;width:20.50px;height:1.00px;background:#282828;"></div>
<div class="t" style="top:394.98px;font-size:10.5px;line-height:10.5px;color:#e0e0e0;left:5.20px;width:20px;text-align:center;">23</div>
<div class="r" style="left:5.00px;top:419.38px;width:20.50px;height:1.00px;background:#282828;"></div>
<div class="t" style="top:408.39px;font-size:10.5px;line-height:10.5px;color:#e0e0e0;left:5.20px;width:20px;text-align:center;">24</div>
<div class="r" style="left:5.00px;top:432.79px;width:20.50px;height:1.00px;background:#282828;"></div>
<div class="t" style="top:421.80px;font-size:10.5px;line-height:10.5px;color:#e0e0e0;left:5.20px;width:20px;text-align:center;">25</div>
<div class="r" style="left:5.00px;top:446.20px;width:20.50px;height:1.00px;background:#282828;"></div>
<div class="t" style="top:435.21px;font-size:10.5px;line-height:10.5px;color:#e0e0e0;left:5.20px;width:20px;text-align:center;">26</div>
<div class="r" style="left:5.00px;top:459.61px;width:20.50px;height:1.00px;background:#282828;"></div>
<div class="t" style="top:448.62px;font-size:10.5px;line-height:10.5px;color:#e0e0e0;left:5.20px;width:20px;text-align:center;">27</div>
<div class="r" style="left:5.00px;top:473.02px;width:20.50px;height:1.00px;background:#282828;"></div>
<div class="t" style="top:462.03px;font-size:10.5px;line-height:10.5px;color:#e0e0e0;left:5.20px;width:20px;text-align:center;">28</div>
<div class="r" style="left:5.00px;top:486.43px;width:20.50px;height:1.00px;background:#282828;"></div>
<div class="t" style="top:475.44px;font-size:10.5px;line-height:10.5px;color:#e0e0e0;left:5.20px;width:20px;text-align:center;">29</div>
<div class="r" style="left:5.00px;top:499.84px;width:20.50px;height:1.00px;background:#282828;"></div>
<div class="t" style="top:488.85px;font-size:10.5px;line-height:10.5px;color:#e0e0e0;left:5.20px;width:20px;text-align:center;">30</div>
<div class="r" style="left:5.00px;top:513.25px;width:20.50px;height:1.00px;background:#282828;"></div>
<div class="t" style="top:502.26px;font-size:10.5px;line-height:10.5px;color:#e0e0e0;left:5.20px;width:20px;text-align:center;">31</div>
<div class="r" style="left:5.00px;top:526.66px;width:20.50px;height:1.00px;background:#282828;"></div>
<div class="t" style="top:515.67px;font-size:10.5px;line-height:10.5px;color:#e0e0e0;left:5.20px;width:20px;text-align:center;">32</div>
<div class="r" style="left:5.00px;top:540.07px;width:20.50px;height:1.00px;background:#282828;"></div>
<div class="t" style="top:529.08px;font-size:10.5px;line-height:10.5px;color:#e0e0e0;left:5.20px;width:20px;text-align:center;">33</div>
<div class="r" style="left:5.00px;top:553.48px;width:20.50px;height:1.00px;background:#282828;"></div>
<div class="t" style="top:542.49px;font-size:10.5px;line-height:10.5px;color:#e0e0e0;left:5.20px;width:20px;text-align:center;">34</div>
<div class="r" style="left:5.00px;top:566.89px;width:20.50px;height:1.00px;background:#282828;"></div>
<div class="t" style="top:555.90px;font-size:10.5px;line-height:10.5px;color:#e0e0e0;left:5.20px;width:20px;text-align:center;">35</div>
<div class="r" style="left:5.00px;top:580.30px;width:20.50px;height:1.00px;background:#282828;"></div>
<div class="t" style="top:569.31px;font-size:10.5px;line-height:10.5px;color:#e0e0e0;left:5.20px;width:20px;text-align:center;">36</div>
<div class="r" style="left:5.00px;top:597.20px;width:20.50px;height:1.00px;background:#282828;"></div>
<div class="t" style="top:586.21px;font-size:10.5px;line-height:10.5px;color:#e0e0e0;left:5.20px;width:20px;text-align:center;">37</div>
<div class="r" style="left:5.00px;top:610.00px;width:20.50px;height:1.00px;background:#282828;"></div>
<div class="t" style="top:599.01px;font-size:10.5px;line-height:10.5px;color:#e0e0e0;left:5.20px;width:20px;text-align:center;">38</div>
<div class="r" style="left:5.00px;top:623.80px;width:20.50px;height:1.00px;background:#282828;"></div>
<div class="t" style="top:612.81px;font-size:10.5px;line-height:10.5px;color:#e0e0e0;left:5.20px;width:20px;text-align:center;">39</div>
<div class="r" style="left:5.00px;top:643.70px;width:20.50px;height:1.00px;background:#282828;"></div>
<div class="t" style="top:632.71px;font-size:10.5px;line-height:10.5px;color:#e0e0e0;left:5.20px;width:20px;text-align:center;">40</div>
<div class="r" style="left:5.00px;top:657.50px;width:20.50px;height:1.00px;background:#282828;"></div>
<div class="t" style="top:646.51px;font-size:10.5px;line-height:10.5px;color:#e0e0e0;left:5.20px;width:20px;text-align:center;">41</div>
<div class="r" style="left:5.00px;top:670.70px;width:20.50px;height:1.00px;background:#282828;"></div>
<div class="t" style="top:659.71px;font-size:10.5px;line-height:10.5px;color:#e0e0e0;left:5.20px;width:20px;text-align:center;">42</div>
<div class="r" style="left:5.00px;top:683.90px;width:20.50px;height:1.00px;background:#282828;"></div>
<div class="t" style="top:672.91px;font-size:10.5px;line-height:10.5px;color:#e0e0e0;left:5.20px;width:20px;text-align:center;">43</div>
<div class="r" style="left:5.00px;top:697.30px;width:20.50px;height:1.00px;background:#282828;"></div>
<div class="t" style="top:686.31px;font-size:10.5px;line-height:10.5px;color:#e0e0e0;left:5.20px;width:20px;text-align:center;">44</div>
<div class="r" style="left:5.00px;top:711.10px;width:20.50px;height:1.00px;background:#282828;"></div>
<div class="t" style="top:700.11px;font-size:10.5px;line-height:10.5px;color:#e0e0e0;left:5.20px;width:20px;text-align:center;">45</div>
<div class="r" style="left:5.00px;top:731.10px;width:20.50px;height:1.00px;background:#282828;"></div>
<div class="t" style="top:720.11px;font-size:10.5px;line-height:10.5px;color:#e0e0e0;left:5.20px;width:20px;text-align:center;">46</div>
<div class="r" style="left:5.00px;top:744.50px;width:20.50px;height:1.00px;background:#282828;"></div>
<div class="t" style="top:733.51px;font-size:10.5px;line-height:10.5px;color:#e0e0e0;left:5.20px;width:20px;text-align:center;">47</div>
<div class="r" style="left:5.00px;top:757.70px;width:20.50px;height:1.00px;background:#282828;"></div>
<div class="t" style="top:746.71px;font-size:10.5px;line-height:10.5px;color:#e0e0e0;left:5.20px;width:20px;text-align:center;">48</div>
<div class="r" style="left:5.00px;top:771.50px;width:20.50px;height:1.00px;background:#282828;"></div>
<div class="t" style="top:760.51px;font-size:10.5px;line-height:10.5px;color:#e0e0e0;left:5.20px;width:20px;text-align:center;">49</div>
<div class="r" style="left:5.00px;top:791.90px;width:20.50px;height:1.00px;background:#282828;"></div>
<div class="t" style="top:780.91px;font-size:10.5px;line-height:10.5px;color:#e0e0e0;left:5.20px;width:20px;text-align:center;">50</div>
<div class="r" style="left:5.00px;top:805.50px;width:20.50px;height:1.00px;background:#282828;"></div>
<div class="r" style="left:5.00px;top:800.00px;width:20.50px;height:1.00px;background:#0c0c0c;"></div>
<div class="r" style="left:1370.00px;top:133.00px;width:15.00px;height:667.00px;background:#0e0e0e;"></div>
<svg class="s" style="left:1370px;top:133px" width="15" height="667"><polygon points="7.5,4 11,8 4,8" fill="#9a9a9a"/><rect x="4.3" y="12.6" width="6.5" height="628" rx="3.2" fill="#8c8c8c"/><polygon points="7.5,663.5 11,659.5 4,659.5" fill="#9a9a9a"/></svg>
<svg class="s" style="left:15.60px;top:16.00px" width="13" height="13" viewBox="0 0 13 13"><defs><linearGradient id="xg" x1="0" x2="1"><stop offset="0" stop-color="#55cf5a"/><stop offset="1" stop-color="#b9ef6c"/></linearGradient></defs><rect x="2.2" y="0.5" width="10.3" height="11.7" rx="1.4" fill="#2a8f3c"/><rect x="2.2" y="0.5" width="10.3" height="4.6" rx="1.4" fill="url(#xg)"/><rect x="2.2" y="4.2" width="10.3" height="1" fill="#8fdc66"/><rect x="0.8" y="4.3" width="5.6" height="5.4" rx="0.8" fill="#14592b"/><path d="M2.2,5.6 L5,8.4 M5,5.6 L2.2,8.4" stroke="#ffffff" stroke-width="1.1"/></svg>
<div class="r" style="left:5.00px;top:5.60px;width:1380.00px;height:0.80px;background:#141414;"></div>
<div class="t" style="top:18.47px;font-size:9.01px;line-height:9.01px;color:#e6e6e6;transform:scaleX(0.9450);transform-origin:left center;letter-spacing:-0.03px;left:45.70px;-webkit-text-stroke:0.2px #e6e6e6;">online-grocery-store.xlsx</div>
<div class="t" style="top:18.90px;font-size:8.5px;line-height:8.5px;color:#e6e6e6;left:143.30px;-webkit-text-stroke:0.2px #e6e6e6;">-</div>
<div class="t" style="top:18.47px;font-size:9.01px;line-height:9.01px;color:#e6e6e6;transform:scaleX(0.9450);transform-origin:left center;letter-spacing:-0.4px;left:151.70px;-webkit-text-stroke:0.2px #e6e6e6;">Read-Only</div>
<svg class="s" style="left:192.00px;top:18.00px" width="10" height="10"><polyline points="1.40,3.20 5,6.80 8.60,3.20" fill="none" stroke="#e0e0e0" stroke-width="1.1" stroke-linecap="round" stroke-linejoin="round"/></svg>
<svg class="s" style="left:1184.00px;top:15.00px" width="14" height="14" viewBox="0 0 14 14"><circle cx="8.3" cy="5.7" r="3.8" fill="none" stroke="#e0e0e0" stroke-width="1.2"/><line x1="5.5" y1="8.5" x2="1.8" y2="12.3" stroke="#e0e0e0" stroke-width="1.3" stroke-linecap="round"/></svg>
<svg class="s" style="left:1222.00px;top:13.00px" width="19" height="19" viewBox="0 0 19 19"><defs><clipPath id="av"><circle cx="9.5" cy="9.5" r="8.7"/></clipPath></defs><circle cx="9.5" cy="9.5" r="8.7" fill="#a9c6d8"/><g clip-path="url(#av)"><ellipse cx="9.6" cy="9" rx="3.6" ry="4.6" fill="#c9977a"/><ellipse cx="9.5" cy="19" rx="7" ry="4.5" fill="#7d5a48"/><rect x="0" y="0" width="19" height="4" fill="#c4dbe8"/></g></svg>
<svg class="s" style="left:1258.00px;top:17.00px" width="14" height="11" viewBox="0 0 14 11"><polygon points="1,3.5 3.5,0.7 10.5,0.7 13,3.5 7,10.3" fill="none" stroke="#e8e8e8" stroke-width="1.1" stroke-linejoin="round"/><line x1="1" y1="3.5" x2="13" y2="3.5" stroke="#e8e8e8" stroke-width="1"/><polyline points="5,0.7 4.5,3.5 7,10.3 9.5,3.5 9,0.7" fill="none" stroke="#e8e8e8" stroke-width="0.9"/></svg>
<div class="r" style="left:1294.40px;top:21.60px;width:8.20px;height:1.00px;background:#e6e6e6;"></div>
<svg class="s" style="left:1328.00px;top:18.00px" width="11" height="10" viewBox="0 0 11 10"><rect x="0.7" y="2.3" width="6.8" height="6.8" rx="1.3" fill="none" stroke="#e6e6e6" stroke-width="1"/><path d="M2.6,2.3 V1.8 Q2.6,0.6 3.9,0.6 H8.4 Q9.6,0.6 9.6,1.8 V6.4 Q9.6,7.4 8.4,7.4 H7.5" fill="none" stroke="#e6e6e6" stroke-width="1"/></svg>
<svg class="s" style="left:1363.50px;top:18.50px" width="9" height="9" viewBox="0 0 9 9"><line x1="0.8" y1="0.8" x2="8" y2="8" stroke="#eaeaea" stroke-width="1.1"/><line x1="8" y1="0.8" x2="0.8" y2="8" stroke="#eaeaea" stroke-width="1.1"/></svg>
<div class="t" style="top:46.15px;font-size:9.75px;line-height:9.75px;color:#e6e6e6;transform:scaleX(0.9450);transform-origin:left center;letter-spacing:0.1px;left:19.70px;-webkit-text-stroke:0.2px #e6e6e6;">File</div>
<div class="t" style="top:46.32px;font-size:9.54px;line-height:9.54px;color:#f2f2f2;transform:scaleX(0.9450);transform-origin:left center;font-weight:700;letter-spacing:0.35px;left:53.20px;-webkit-text-stroke:0.2px #f2f2f2;">Home</div>
<div class="t" style="top:46.15px;font-size:9.75px;line-height:9.75px;color:#e6e6e6;transform:scaleX(0.9450);transform-origin:left center;letter-spacing:0.1px;left:94.60px;-webkit-text-stroke:0.2px #e6e6e6;">Insert</div>
<div class="t" style="top:46.15px;font-size:9.75px;line-height:9.75px;color:#e6e6e6;transform:scaleX(0.9450);transform-origin:left center;letter-spacing:0.1px;left:132.60px;-webkit-text-stroke:0.2px #e6e6e6;">Draw</div>
<div class="t" style="top:46.15px;font-size:9.75px;line-height:9.75px;color:#e6e6e6;transform:scaleX(0.9450);transform-origin:left center;letter-spacing:0.1px;left:168.80px;-webkit-text-stroke:0.2px #e6e6e6;">Page Layout</div>
<div class="t" style="top:46.15px;font-size:9.75px;line-height:9.75px;color:#e6e6e6;transform:scaleX(0.9450);transform-origin:left center;letter-spacing:0.1px;left:235.10px;-webkit-text-stroke:0.2px #e6e6e6;">Formulas</div>
<div class="t" style="top:46.15px;font-size:9.75px;line-height:9.75px;color:#e6e6e6;transform:scaleX(0.9450);transform-origin:left center;letter-spacing:0.1px;left:287.30px;-webkit-text-stroke:0.2px #e6e6e6;">Data</div>
<div class="t" style="top:46.15px;font-size:9.75px;line-height:9.75px;color:#e6e6e6;transform:scaleX(0.9450);transform-origin:left center;letter-spacing:0.1px;left:321.50px;-webkit-text-stroke:0.2px #e6e6e6;">Review</div>
<div class="t" style="top:46.15px;font-size:9.75px;line-height:9.75px;color:#e6e6e6;transform:scaleX(0.9450);transform-origin:left center;letter-spacing:0.1px;left:365.00px;-webkit-text-stroke:0.2px #e6e6e6;">View</div>
<div class="t" style="top:46.15px;font-size:9.75px;line-height:9.75px;color:#e6e6e6;transform:scaleX(0.9450);transform-origin:left center;letter-spacing:0.35px;left:399.20px;-webkit-text-stroke:0.2px #e6e6e6;">Automate</div>
<div class="t" style="top:46.15px;font-size:9.75px;line-height:9.75px;color:#e6e6e6;transform:scaleX(0.9450);transform-origin:left center;letter-spacing:0.1px;left:455.40px;-webkit-text-stroke:0.2px #e6e6e6;">Help</div>
<div class="r" style="left:53.20px;top:57.00px;width:27.10px;height:1.60px;background:#4fb56a;border-radius:1px;"></div>
<div class="r" style="left:1255.6px;top:41.4px;width:64.6px;height:17.9px;box-sizing:border-box;border:1px solid #3e3e3e;background:#262626;border-radius:4px;"></div>
<svg class="s" style="left:1258.50px;top:46.00px" width="10" height="10" viewBox="0 0 10 10"><path d="M0.8,0.8 H8.8 V6 H4.5 L2.3,8.3 V6 H0.8 Z" fill="none" stroke="#e6e6e6" stroke-width="0.95" stroke-linejoin="round"/></svg>
<div class="t" style="top:46.15px;font-size:9.75px;line-height:9.75px;color:#f0f0f0;transform:scaleX(0.9450);transform-origin:left center;letter-spacing:0.05px;left:1270.50px;-webkit-text-stroke:0.2px #f0f0f0;">Comments</div>
<div class="r" style="left:1325.8px;top:41.4px;width:50.2px;height:17.9px;background:#3fae5c;border-radius:4px;"></div>
<svg class="s" style="left:1328.30px;top:45.50px" width="10" height="10" viewBox="0 0 10 10"><path d="M0.8,4 V8.8 H8 V6.8" fill="none" stroke="#1a1a1a" stroke-width="0.9"/><path d="M3,7 Q3.3,3.5 6.5,3.5 V1.5 L9.2,4.3 L6.5,7 V5.2 Q4.6,5.2 3,7 Z" fill="none" stroke="#1a1a1a" stroke-width="0.85" stroke-linejoin="round"/></svg>
<div class="t" style="top:46.78px;font-size:9px;line-height:9px;color:#141414;letter-spacing:0.1px;left:1340.70px;">Share</div>
<svg class="s" style="left:1366.20px;top:45.80px" width="10" height="10"><polyline points="2.80,3.90 5,6.10 7.20,3.90" fill="none" stroke="#141414" stroke-width="1.1" stroke-linecap="round" stroke-linejoin="round"/></svg>
<div class="r" style="left:11.50px;top:61.50px;width:1367.50px;height:71.10px;background:#282828;border-radius:5px;"></div>
<svg class="s" style="left:25.00px;top:66.00px" width="23" height="24" viewBox="0 0 23 24"><path d="M1.5,4.3 H4.5 M13.5,4.3 H16.5 V10" fill="none" stroke="#8a8a8a" stroke-width="1.1"/><path d="M1.5,4.3 V21.8 H11" fill="none" stroke="#8a8a8a" stroke-width="1.1"/><path d="M4.5,5.5 L6,1.5 H12 L13.5,5.5 Z" fill="none" stroke="#8a8a8a" stroke-width="1.1" stroke-linejoin="round"/><rect x="11.5" y="10.3" width="9.7" height="12.4" fill="#282828" stroke="#8a8a8a" stroke-width="1.1"/></svg>
<div class="t" style="top:93.30px;font-size:8.5px;line-height:8.5px;color:#6c6c6c;letter-spacing:-0.1px;left:25.00px;">Paste</div>
<svg class="s" style="left:29.80px;top:103.00px" width="10" height="10"><polyline points="2.70,3.85 5,6.15 7.30,3.85" fill="none" stroke="#6c6c6c" stroke-width="1.1" stroke-linecap="round" stroke-linejoin="round"/></svg>
<svg class="s" style="left:53.00px;top:66.00px" width="12" height="14" viewBox="0 0 12 14"><line x1="3.5" y1="1" x2="8.5" y2="10" stroke="#d8d8d8" stroke-width="0.9"/><line x1="8.5" y1="1" x2="3.5" y2="10" stroke="#d8d8d8" stroke-width="0.9"/><circle cx="3.8" cy="11.4" r="1.8" fill="#3d8fd8"/><circle cx="8.3" cy="11.4" r="1.8" fill="#3d8fd8"/></svg>
<div class="t" style="top:68.80px;font-size:9.22px;line-height:9.22px;color:#e8e8e8;transform:scaleX(0.9450);transform-origin:left center;letter-spacing:0.05px;left:68.00px;-webkit-text-stroke:0.2px #e8e8e8;">Cut</div>
<svg class="s" style="left:52.50px;top:84.50px" width="14" height="14" viewBox="0 0 14 14"><path d="M5.3,11 H1 V1.3 H5.3" fill="none" stroke="#d0d0d0" stroke-width="1"/><path d="M5.6,3.8 H9.6 L12.6,6.8 V12.8 H5.6 Z" fill="none" stroke="#d0d0d0" stroke-width="1" stroke-linejoin="round"/><rect x="7.5" y="9" width="3" height="1.6" fill="#a0a0a0"/></svg>
<div class="t" style="top:88.10px;font-size:9.22px;line-height:9.22px;color:#e8e8e8;transform:scaleX(0.9450);transform-origin:left center;letter-spacing:0.05px;left:68.00px;-webkit-text-stroke:0.2px #e8e8e8;">Copy</div>
<svg class="s" style="left:98.00px;top:87.00px" width="10" height="10"><polyline points="2.90,3.95 5,6.05 7.10,3.95" fill="none" stroke="#d0d0d0" stroke-width="1.1" stroke-linecap="round" stroke-linejoin="round"/></svg>
<svg class="s" style="left:53.00px;top:103.00px" width="13" height="13" viewBox="0 0 13 13"><polygon points="1.5,7.8 5.5,4 9,7.5 5,11.8" fill="#f3b638"/><polygon points="1.5,7.8 5.5,4 6.5,5 2.8,9" fill="#f7d26a"/><line x1="6.5" y1="5.8" x2="11.3" y2="1.2" stroke="#d8d8d8" stroke-width="1.5" stroke-linecap="round"/><polyline points="5.5,4 9,7.5" stroke="#d8d8d8" stroke-width="1" fill="none"/></svg>
<div class="t" style="top:106.65px;font-size:8.8px;line-height:8.8px;color:#e8e8e8;transform:scaleX(0.9450);transform-origin:left center;left:68.00px;-webkit-text-stroke:0.2px #e8e8e8;">Format Painter</div>
<div class="t" style="top:122.90px;font-size:8.27px;line-height:8.27px;color:#d6d6d6;transform:scaleX(0.9450);transform-origin:left center;letter-spacing:-0.15px;left:52.00px;-webkit-text-stroke:0.2px #d6d6d6;">Clipboard</div>
<svg class="s" style="left:125.50px;top:121.50px" width="9" height="9" viewBox="0 0 9 9"><path d="M1,7.5 V1 H7.5" fill="none" stroke="#c8c8c8" stroke-width="0.9"/><path d="M2.8,2.8 L7,7 M7,4.2 V7 H4.2" fill="none" stroke="#c8c8c8" stroke-width="0.9"/></svg>
<div class="r" style="left:134.90px;top:66.00px;width:1.00px;height:64.00px;background:#3b3b3b;"></div>
<div class="r" style="left:141.7px;top:70.4px;width:86px;height:17px;box-sizing:border-box;border:1px solid #4e4e4e;border-radius:3px;background:#242424;"></div>
<div class="t" style="top:74.24px;font-size:8.69px;line-height:8.69px;color:#e8e8e8;transform:scaleX(0.9450);transform-origin:left center;left:143.50px;-webkit-text-stroke:0.2px #e8e8e8;">Tahoma</div>
<svg class="s" style="left:219.00px;top:74.00px" width="10" height="10"><polyline points="2.80,3.90 5,6.10 7.20,3.90" fill="none" stroke="#d0d0d0" stroke-width="1.1" stroke-linecap="round" stroke-linejoin="round"/></svg>
<div class="r" style="left:229.8px;top:70.4px;width:30.5px;height:17px;box-sizing:border-box;border:1px solid #4e4e4e;border-radius:3px;background:#242424;"></div>
<div class="t" style="top:74.66px;font-size:8.2px;line-height:8.2px;color:#e8e8e8;left:231.20px;-webkit-text-stroke:0.2px #e8e8e8;">8</div>
<svg class="s" style="left:251.80px;top:74.00px" width="10" height="10"><polyline points="2.80,3.90 5,6.10 7.20,3.90" fill="none" stroke="#d0d0d0" stroke-width="1.1" stroke-linecap="round" stroke-linejoin="round"/></svg>
<div class="t" style="top:71.97px;font-size:12.2px;line-height:12.2px;color:#d8d8d8;left:265.20px;-webkit-text-stroke:0.2px #d8d8d8;">A</div>
<svg class="s" style="left:273.00px;top:71.50px" width="5" height="4" viewBox="0 0 5 4"><polyline points="0.7,3 2.5,1 4.3,3" fill="none" stroke="#4aa3e8" stroke-width="1"/></svg>
<div class="t" style="top:73.67px;font-size:10.2px;line-height:10.2px;color:#d8d8d8;left:285.00px;-webkit-text-stroke:0.2px #d8d8d8;">A</div>
<svg class="s" style="left:292.00px;top:72.50px" width="5" height="4" viewBox="0 0 5 4"><polyline points="0.7,1 2.5,3 4.3,1" fill="none" stroke="#4aa3e8" stroke-width="1"/></svg>
<div class="t" style="top:96.51px;font-size:9.2px;line-height:9.2px;color:#e0e0e0;font-weight:700;left:146.80px;-webkit-text-stroke:0.2px #e0e0e0;">B</div>
<div class="t" style="top:96.17px;font-size:9.6px;line-height:9.6px;color:#e0e0e0;left:166.50px;font-family:'Liberation Serif',serif;font-style:italic;-webkit-text-stroke:0.2px #e0e0e0;">I</div>
<div class="t" style="top:96.68px;font-size:9px;line-height:9px;color:#e0e0e0;left:184.30px;-webkit-text-stroke:0.2px #e0e0e0;">U</div>
<div class="r" style="left:184.30px;top:105.30px;width:6.20px;height:0.90px;background:#e0e0e0;"></div>
<svg class="s" style="left:195.80px;top:96.50px" width="10" height="10"><polyline points="2.90,3.95 5,6.05 7.10,3.95" fill="none" stroke="#d0d0d0" stroke-width="1.1" stroke-linecap="round" stroke-linejoin="round"/></svg>
<div class="r" style="left:208.30px;top:93.00px;width:1.00px;height:16.50px;background:#3b3b3b;"></div>
<svg class="s" style="left:212.00px;top:95.50px" width="12.5" height="12" viewBox="0 0 12.5 12"><rect x="0.6" y="0.6" width="11" height="10.8" fill="none" stroke="#cfcfcf" stroke-width="1.1"/><line x1="6.1" y1="0.6" x2="6.1" y2="11.4" stroke="#9a9a9a" stroke-width="0.9"/><line x1="0.6" y1="6" x2="11.6" y2="6" stroke="#9a9a9a" stroke-width="0.9"/></svg>
<svg class="s" style="left:227.00px;top:96.50px" width="10" height="10"><polyline points="2.90,3.95 5,6.05 7.10,3.95" fill="none" stroke="#d0d0d0" stroke-width="1.1" stroke-linecap="round" stroke-linejoin="round"/></svg>
<div class="r" style="left:239.00px;top:93.00px;width:1.00px;height:16.50px;background:#3b3b3b;"></div>
<svg class="s" style="left:243.50px;top:95.00px" width="13" height="9" viewBox="0 0 13 9"><path d="M2.5,4.5 L6,1 L9.5,4.5 L6,8 Z" fill="none" stroke="#d8d8d8" stroke-width="1"/><path d="M10.5,3.5 Q12,5.5 10.8,7" fill="none" stroke="#4aa3e8" stroke-width="1.2"/></svg>
<div class="r" style="left:243.60px;top:104.50px;width:11.50px;height:2.90px;background:#f2e21a;"></div>
<svg class="s" style="left:258.10px;top:96.50px" width="10" height="10"><polyline points="2.90,3.95 5,6.05 7.10,3.95" fill="none" stroke="#d0d0d0" stroke-width="1.1" stroke-linecap="round" stroke-linejoin="round"/></svg>
<div class="t" style="top:95.36px;font-size:9.5px;line-height:9.5px;color:#d8d8d8;left:275.20px;-webkit-text-stroke:0.2px #d8d8d8;">A</div>
<div class="r" style="left:272.90px;top:104.50px;width:11.90px;height:2.90px;background:#e01b1b;"></div>
<svg class="s" style="left:287.50px;top:96.50px" width="10" height="10"><polyline points="2.90,3.95 5,6.05 7.10,3.95" fill="none" stroke="#d0d0d0" stroke-width="1.1" stroke-linecap="round" stroke-linejoin="round"/></svg>
<div class="t" style="top:122.81px;font-size:8.37px;line-height:8.37px;color:#d6d6d6;transform:scaleX(0.9450);transform-origin:center center;left:193.30px;width:40px;text-align:center;-webkit-text-stroke:0.2px #d6d6d6;">Font</div>
<svg class="s" style="left:293.20px;top:121.50px" width="9" height="9" viewBox="0 0 9 9"><path d="M1,7.5 V1 H7.5" fill="none" stroke="#c8c8c8" stroke-width="0.9"/><path d="M2.8,2.8 L7,7 M7,4.2 V7 H4.2" fill="none" stroke="#c8c8c8" stroke-width="0.9"/></svg>
<div class="r" style="left:302.50px;top:66.00px;width:1.00px;height:64.00px;background:#3b3b3b;"></div>
<svg class="s" style="left:313.00px;top:73.00px" width="14" height="14" viewBox="0 0 14 14"><rect x="0" y="0.0" width="11" height="1" fill="#cfcfcf"/><rect x="0" y="3.2" width="11" height="1" fill="#cfcfcf"/><rect x="1.5" y="6.4" width="8" height="1" fill="#cfcfcf"/></svg>
<div class="r" style="left:328px;top:69.8px;width:18px;height:17.4px;box-sizing:border-box;border:1px solid #5a5a5a;border-radius:3px;background:#3a3a3a;"></div>
<svg class="s" style="left:331.50px;top:74.50px" width="14" height="14" viewBox="0 0 14 14"><rect x="0" y="0.0" width="11" height="1" fill="#cfcfcf"/><rect x="0" y="3.0" width="11" height="1" fill="#cfcfcf"/><rect x="0" y="6.0" width="11" height="1" fill="#cfcfcf"/></svg>
<svg class="s" style="left:350.00px;top:77.00px" width="14" height="14" viewBox="0 0 14 14"><rect x="0" y="0.0" width="11" height="1" fill="#cfcfcf"/><rect x="0" y="3.2" width="11" height="1" fill="#cfcfcf"/><rect x="1.5" y="6.4" width="8" height="1" fill="#cfcfcf"/></svg>
<div class="r" style="left:365.20px;top:67.00px;width:1.00px;height:45.00px;background:#3b3b3b;"></div>
<svg class="s" style="left:369.00px;top:72.50px" width="14" height="13" viewBox="0 0 14 13"><text x="0.5" y="6.5" font-size="6.5" font-family="Liberation Sans" fill="#cfcfcf" transform="rotate(-35 4 5)">ab</text><line x1="4" y1="11.5" x2="12" y2="3.5" stroke="#4aa3e8" stroke-width="1.2"/><polyline points="9,3.3 12,3.3 12,6.3" fill="none" stroke="#4aa3e8" stroke-width="1.1"/></svg>
<svg class="s" style="left:382.80px;top:74.00px" width="10" height="10"><polyline points="2.90,3.95 5,6.05 7.10,3.95" fill="none" stroke="#d0d0d0" stroke-width="1.1" stroke-linecap="round" stroke-linejoin="round"/></svg>
<svg class="s" style="left:313.00px;top:96.00px" width="14" height="14" viewBox="0 0 14 14"><rect x="0" y="0.0" width="11" height="1" fill="#cfcfcf"/><rect x="0" y="3.2" width="8" height="1" fill="#cfcfcf"/><rect x="0" y="6.4" width="11" height="1" fill="#cfcfcf"/><rect x="0" y="9.600000000000001" width="6" height="1" fill="#cfcfcf"/></svg>
<svg class="s" style="left:331.00px;top:96.00px" width="14" height="14" viewBox="0 0 14 14"><rect x="0" y="0.0" width="11" height="1" fill="#cfcfcf"/><rect x="1.5" y="3.2" width="8" height="1" fill="#cfcfcf"/><rect x="0" y="6.4" width="11" height="1" fill="#cfcfcf"/><rect x="2.5" y="9.600000000000001" width="6" height="1" fill="#cfcfcf"/></svg>
<svg class="s" style="left:350.00px;top:96.00px" width="14" height="14" viewBox="0 0 14 14"><rect x="0" y="0.0" width="11" height="1" fill="#cfcfcf"/><rect x="3" y="3.2" width="8" height="1" fill="#cfcfcf"/><rect x="0" y="6.4" width="11" height="1" fill="#cfcfcf"/><rect x="5" y="9.600000000000001" width="6" height="1" fill="#cfcfcf"/></svg>
<svg class="s" style="left:370.00px;top:95.50px" width="13" height="12" viewBox="0 0 13 12"><rect x="0" y="0.5" width="12" height="1" fill="#cfcfcf"/><rect x="5" y="3.5" width="7" height="1" fill="#cfcfcf"/><rect x="5" y="6.5" width="7" height="1" fill="#cfcfcf"/><rect x="0" y="9.5" width="12" height="1" fill="#cfcfcf"/><polygon points="0.5,5.5 3.8,3.2 3.8,7.8" fill="#4aa3e8"/></svg>
<svg class="s" style="left:389.00px;top:95.50px" width="13" height="12" viewBox="0 0 13 12"><rect x="0" y="0.5" width="12" height="1" fill="#cfcfcf"/><rect x="5" y="3.5" width="7" height="1" fill="#cfcfcf"/><rect x="5" y="6.5" width="7" height="1" fill="#cfcfcf"/><rect x="0" y="9.5" width="12" height="1" fill="#cfcfcf"/><polygon points="4,5.5 0.7,3.2 0.7,7.8" fill="#4aa3e8"/></svg>
<div class="r" style="left:407.10px;top:67.00px;width:1.00px;height:48.00px;background:#3b3b3b;"></div>
<svg class="s" style="left:415.50px;top:72.00px" width="13" height="13" viewBox="0 0 13 13"><text x="0.3" y="5.5" font-size="6" font-family="Liberation Sans" fill="#cfcfcf">ab</text><text x="0.3" y="11.5" font-size="6" font-family="Liberation Sans" fill="#cfcfcf">c</text><path d="M9.5,3 Q12.5,6 9.5,9.5 H6" fill="none" stroke="#4aa3e8" stroke-width="1.1"/><polyline points="7.5,8 6,9.5 7.5,11" fill="none" stroke="#4aa3e8" stroke-width="1"/></svg>
<div class="t" style="top:74.57px;font-size:8.9px;line-height:8.9px;color:#e8e8e8;transform:scaleX(0.9450);transform-origin:left center;letter-spacing:-0.05px;left:429.80px;-webkit-text-stroke:0.2px #e8e8e8;">Wrap Text</div>
<svg class="s" style="left:414.50px;top:95.00px" width="13" height="13" viewBox="0 0 13 13"><rect x="0.6" y="0.6" width="11.5" height="11" fill="none" stroke="#cfcfcf" stroke-width="1"/><line x1="0.6" y1="3.5" x2="12" y2="3.5" stroke="#cfcfcf" stroke-width="0.8"/><line x1="0.6" y1="8.8" x2="12" y2="8.8" stroke="#cfcfcf" stroke-width="0.8"/><rect x="1.2" y="4.2" width="10.3" height="4" fill="#2a78c8"/><line x1="2.5" y1="6.2" x2="10.2" y2="6.2" stroke="#9fd0ff" stroke-width="0.8"/></svg>
<div class="t" style="top:97.47px;font-size:9.01px;line-height:9.01px;color:#e8e8e8;transform:scaleX(0.9450);transform-origin:left center;letter-spacing:-0.05px;left:429.80px;-webkit-text-stroke:0.2px #e8e8e8;">Merge &amp; Center</div>
<svg class="s" style="left:500.00px;top:97.00px" width="10" height="10"><polyline points="2.90,3.95 5,6.05 7.10,3.95" fill="none" stroke="#d0d0d0" stroke-width="1.1" stroke-linecap="round" stroke-linejoin="round"/></svg>
<div class="t" style="top:122.81px;font-size:8.37px;line-height:8.37px;color:#d6d6d6;transform:scaleX(0.9450);transform-origin:center center;left:375.60px;width:60px;text-align:center;-webkit-text-stroke:0.2px #d6d6d6;">Alignment</div>
<svg class="s" style="left:508.40px;top:121.50px" width="9" height="9" viewBox="0 0 9 9"><path d="M1,7.5 V1 H7.5" fill="none" stroke="#c8c8c8" stroke-width="0.9"/><path d="M2.8,2.8 L7,7 M7,4.2 V7 H4.2" fill="none" stroke="#c8c8c8" stroke-width="0.9"/></svg>
<div class="r" style="left:518.60px;top:66.00px;width:1.00px;height:64.00px;background:#3b3b3b;"></div>
<div class="r" style="left:524.9px;top:70.3px;width:104.6px;height:16.4px;box-sizing:border-box;border:1px solid #4e4e4e;border-radius:3px;background:#242424;"></div>
<div class="t" style="top:74.57px;font-size:8.9px;line-height:8.9px;color:#e8e8e8;transform:scaleX(0.9450);transform-origin:left center;left:526.50px;-webkit-text-stroke:0.2px #e8e8e8;">General</div>
<svg class="s" style="left:620.00px;top:74.00px" width="10" height="10"><polyline points="2.90,3.95 5,6.05 7.10,3.95" fill="none" stroke="#d0d0d0" stroke-width="1.1" stroke-linecap="round" stroke-linejoin="round"/></svg>
<div class="t" style="top:96.29px;font-size:11px;line-height:11px;color:#d8d8d8;left:522.80px;width:20px;text-align:center;-webkit-text-stroke:0.2px #d8d8d8;">$</div>
<svg class="s" style="left:542.00px;top:96.50px" width="10" height="10"><polyline points="2.90,3.95 5,6.05 7.10,3.95" fill="none" stroke="#d0d0d0" stroke-width="1.1" stroke-linecap="round" stroke-linejoin="round"/></svg>
<div class="t" style="top:95.99px;font-size:11px;line-height:11px;color:#d8d8d8;left:552.60px;width:20px;text-align:center;-webkit-text-stroke:0.2px #d8d8d8;">%</div>
<svg class="s" style="left:577.00px;top:95.00px" width="8" height="12" viewBox="0 0 8 12"><circle cx="4" cy="4" r="2.3" fill="#d8d8d8"/><path d="M5.8,4.5 Q6,8.5 2.5,10.5" fill="none" stroke="#d8d8d8" stroke-width="1.5" stroke-linecap="round"/></svg>
<div class="r" style="left:591.10px;top:93.00px;width:1.00px;height:17.00px;background:#3b3b3b;"></div>
<svg class="s" style="left:595.00px;top:94.50px" width="14" height="13" viewBox="0 0 14 13"><text x="5.5" y="6" font-size="6.3" font-family="Liberation Sans" fill="#cfcfcf">0</text><text x="3.5" y="12" font-size="6.3" font-family="Liberation Sans" fill="#cfcfcf">.00</text><path d="M5,3.5 H1.5" stroke="#4aa3e8" stroke-width="1.2"/><polyline points="3,1.8 1.2,3.5 3,5.2" fill="none" stroke="#4aa3e8" stroke-width="1"/><path d="M1.5,3.5 V7" stroke="#4aa3e8" stroke-width="1.1"/></svg>
<svg class="s" style="left:613.00px;top:94.50px" width="14" height="13" viewBox="0 0 14 13"><text x="4" y="6" font-size="6.3" font-family="Liberation Sans" fill="#cfcfcf">.00</text><text x="7.5" y="12" font-size="6.3" font-family="Liberation Sans" fill="#cfcfcf">0</text><path d="M1,9.8 H6" stroke="#4aa3e8" stroke-width="1.2"/><polyline points="4.5,8 6.3,9.8 4.5,11.6" fill="none" stroke="#4aa3e8" stroke-width="1"/></svg>
<div class="t" style="top:122.81px;font-size:8.37px;line-height:8.37px;color:#d6d6d6;transform:scaleX(0.9450);transform-origin:center center;left:545.70px;width:50px;text-align:center;-webkit-text-stroke:0.2px #d6d6d6;">Number</div>
<svg class="s" style="left:623.50px;top:121.50px" width="9" height="9" viewBox="0 0 9 9"><path d="M1,7.5 V1 H7.5" fill="none" stroke="#c8c8c8" stroke-width="0.9"/><path d="M2.8,2.8 L7,7 M7,4.2 V7 H4.2" fill="none" stroke="#c8c8c8" stroke-width="0.9"/></svg>
<div class="r" style="left:634.50px;top:66.00px;width:1.00px;height:64.00px;background:#3b3b3b;"></div>
<svg class="s" style="left:644.50px;top:68.50px" width="23" height="18" viewBox="0 0 23 18"><rect x="0.7" y="1.5" width="21" height="15.5" fill="none" stroke="#c8c8c8" stroke-width="1.1"/><line x1="0.7" y1="6.8" x2="21.7" y2="6.8" stroke="#c8c8c8" stroke-width="0.9"/><line x1="0.7" y1="11.8" x2="21.7" y2="11.8" stroke="#c8c8c8" stroke-width="0.9"/><line x1="7.7" y1="1.5" x2="7.7" y2="17" stroke="#c8c8c8" stroke-width="0.9"/><line x1="14.7" y1="1.5" x2="14.7" y2="17" stroke="#c8c8c8" stroke-width="0.9"/><rect x="3" y="7.3" width="18.5" height="4" fill="#2f86d6"/><polygon points="0.3,9.3 5,6 5,12.6" fill="#2f86d6"/><line x1="4" y1="9.3" x2="20" y2="9.3" stroke="#a8d4ff" stroke-width="0.8"/></svg>
<div class="t" style="top:93.50px;font-size:9.22px;line-height:9.22px;color:#e8e8e8;transform:scaleX(0.9450);transform-origin:center center;left:635.60px;width:40px;text-align:center;-webkit-text-stroke:0.2px #e8e8e8;">Insert</div>
<svg class="s" style="left:650.60px;top:103.30px" width="10" height="10"><polyline points="2.90,3.95 5,6.05 7.10,3.95" fill="none" stroke="#d0d0d0" stroke-width="1.1" stroke-linecap="round" stroke-linejoin="round"/></svg>
<svg class="s" style="left:675.50px;top:68.50px" width="23" height="18" viewBox="0 0 23 18"><rect x="0.7" y="1.5" width="21" height="15.5" fill="none" stroke="#c8c8c8" stroke-width="1.1"/><line x1="0.7" y1="6.8" x2="21.7" y2="6.8" stroke="#c8c8c8" stroke-width="0.9"/><line x1="0.7" y1="11.8" x2="21.7" y2="11.8" stroke="#c8c8c8" stroke-width="0.9"/><line x1="7.7" y1="1.5" x2="7.7" y2="17" stroke="#c8c8c8" stroke-width="0.9"/><line x1="14.7" y1="1.5" x2="14.7" y2="17" stroke="#c8c8c8" stroke-width="0.9"/><rect x="1.5" y="7.3" width="12" height="4" fill="#2f86d6"/><line x1="14" y1="5.5" x2="21.5" y2="13.5" stroke="#e04848" stroke-width="1.3"/><line x1="21.5" y1="5.5" x2="14" y2="13.5" stroke="#e04848" stroke-width="1.3"/></svg>
<div class="t" style="top:93.50px;font-size:9.22px;line-height:9.22px;color:#e8e8e8;transform:scaleX(0.9450);transform-origin:center center;left:666.70px;width:40px;text-align:center;-webkit-text-stroke:0.2px #e8e8e8;">Delete</div>
<svg class="s" style="left:681.70px;top:103.30px" width="10" height="10"><polyline points="2.90,3.95 5,6.05 7.10,3.95" fill="none" stroke="#d0d0d0" stroke-width="1.1" stroke-linecap="round" stroke-linejoin="round"/></svg>
<svg class="s" style="left:707.50px;top:68.50px" width="23" height="18" viewBox="0 0 23 18"><rect x="0.7" y="1.5" width="21" height="15.5" fill="none" stroke="#c8c8c8" stroke-width="1.1"/><line x1="0.7" y1="6.8" x2="21.7" y2="6.8" stroke="#c8c8c8" stroke-width="0.9"/><line x1="0.7" y1="11.8" x2="21.7" y2="11.8" stroke="#c8c8c8" stroke-width="0.9"/><line x1="7.7" y1="1.5" x2="7.7" y2="17" stroke="#c8c8c8" stroke-width="0.9"/><line x1="14.7" y1="1.5" x2="14.7" y2="17" stroke="#c8c8c8" stroke-width="0.9"/><rect x="4" y="-1" width="14" height="1.3" fill="#2f86d6"/><rect x="8" y="7.3" width="6.8" height="4" fill="#2f86d6"/></svg>
<div class="t" style="top:93.10px;font-size:9.22px;line-height:9.22px;color:#e8e8e8;transform:scaleX(0.9450);transform-origin:center center;left:698.80px;width:40px;text-align:center;-webkit-text-stroke:0.2px #e8e8e8;">Format</div>
<svg class="s" style="left:713.80px;top:103.30px" width="10" height="10"><polyline points="2.90,3.95 5,6.05 7.10,3.95" fill="none" stroke="#d0d0d0" stroke-width="1.1" stroke-linecap="round" stroke-linejoin="round"/></svg>
<div class="t" style="top:122.81px;font-size:8.37px;line-height:8.37px;color:#d6d6d6;transform:scaleX(0.9450);transform-origin:center center;left:667.00px;width:40px;text-align:center;-webkit-text-stroke:0.2px #d6d6d6;">Cells</div>
<div class="r" style="left:739.20px;top:66.00px;width:1.00px;height:64.00px;background:#3b3b3b;"></div>
<svg class="s" style="left:748.50px;top:67.00px" width="12" height="12" viewBox="0 0 12 12"><path d="M10.5,1.5 H1.5 L6,6 L1.5,10.5 H10.5" fill="none" stroke="#d0d0d0" stroke-width="1.1" stroke-linejoin="round"/></svg>
<div class="t" style="top:68.58px;font-size:9.12px;line-height:9.12px;color:#e8e8e8;transform:scaleX(0.9450);transform-origin:left center;left:763.00px;-webkit-text-stroke:0.2px #e8e8e8;">AutoSum</div>
<svg class="s" style="left:809.00px;top:68.20px" width="10" height="10"><polyline points="2.90,3.95 5,6.05 7.10,3.95" fill="none" stroke="#d0d0d0" stroke-width="1.1" stroke-linecap="round" stroke-linejoin="round"/></svg>
<svg class="s" style="left:748.50px;top:85.50px" width="12" height="12" viewBox="0 0 12 12"><rect x="0.6" y="0.6" width="10.8" height="10.8" fill="none" stroke="#c8c8c8" stroke-width="1"/><line x1="0.6" y1="2.6" x2="11.4" y2="2.6" stroke="#c8c8c8" stroke-width="0.8"/><rect x="3" y="6.8" width="6" height="3.2" fill="#2f86d6"/><line x1="6" y1="3.8" x2="6" y2="8.5" stroke="#2f86d6" stroke-width="1.3"/><polyline points="4,6.8 6,8.8 8,6.8" fill="none" stroke="#2f86d6" stroke-width="1"/></svg>
<div class="t" style="top:86.38px;font-size:9.12px;line-height:9.12px;color:#e8e8e8;transform:scaleX(0.9450);transform-origin:left center;left:763.00px;-webkit-text-stroke:0.2px #e8e8e8;">Fill</div>
<svg class="s" style="left:773.00px;top:86.00px" width="10" height="10"><polyline points="2.90,3.95 5,6.05 7.10,3.95" fill="none" stroke="#d0d0d0" stroke-width="1.1" stroke-linecap="round" stroke-linejoin="round"/></svg>
<svg class="s" style="left:748.50px;top:103.50px" width="13" height="13" viewBox="0 0 13 13"><polygon points="1,7.5 7,1.5 11.5,6 5.5,12" fill="none" stroke="#c04bd0" stroke-width="1.2" stroke-linejoin="round"/><polygon points="1.5,7.5 4.5,4.5 9,9 6,12" fill="#c04bd0"/></svg>
<div class="t" style="top:106.24px;font-size:8.69px;line-height:8.69px;color:#e8e8e8;transform:scaleX(0.9450);transform-origin:left center;left:763.00px;-webkit-text-stroke:0.2px #e8e8e8;">Clear</div>
<svg class="s" style="left:782.50px;top:105.50px" width="10" height="10"><polyline points="3.00,4.00 5,6.00 7.00,4.00" fill="none" stroke="#d0d0d0" stroke-width="1.1" stroke-linecap="round" stroke-linejoin="round"/></svg>
<svg class="s" style="left:827.50px;top:67.00px" width="23" height="18" viewBox="0 0 23 18"><text x="0.5" y="7.8" font-size="9" font-family="Liberation Sans" fill="#4aa3e8">A</text><text x="0.8" y="16.8" font-size="9" font-family="Liberation Sans" fill="#cfcfcf">Z</text><path d="M9.5,5 H21.5 L17,10 V15.5 L14,17 V10 Z" fill="none" stroke="#cfcfcf" stroke-width="1.1" stroke-linejoin="round"/></svg>
<div class="t" style="top:92.50px;font-size:9.22px;line-height:9.22px;color:#e8e8e8;transform:scaleX(0.9450);transform-origin:center center;left:818.80px;width:40px;text-align:center;-webkit-text-stroke:0.2px #e8e8e8;">Sort &amp;</div>
<div class="t" style="top:104.07px;font-size:8.9px;line-height:8.9px;color:#e8e8e8;transform:scaleX(0.9450);transform-origin:left center;left:825.80px;-webkit-text-stroke:0.2px #e8e8e8;">Filter</div>
<svg class="s" style="left:844.30px;top:103.00px" width="10" height="10"><polyline points="3.00,4.00 5,6.00 7.00,4.00" fill="none" stroke="#d0d0d0" stroke-width="1.1" stroke-linecap="round" stroke-linejoin="round"/></svg>
<svg class="s" style="left:860.50px;top:66.50px" width="24" height="23" viewBox="0 0 24 23"><circle cx="15" cy="8" r="6.7" fill="none" stroke="#cfcfcf" stroke-width="1.1"/><line x1="10.3" y1="12.8" x2="1.5" y2="21.5" stroke="#cfcfcf" stroke-width="1.2" stroke-linecap="round"/></svg>
<div class="t" style="top:92.50px;font-size:9.22px;line-height:9.22px;color:#e8e8e8;transform:scaleX(0.9450);transform-origin:center center;left:852.80px;width:40px;text-align:center;-webkit-text-stroke:0.2px #e8e8e8;">Find &amp;</div>
<div class="t" style="top:104.24px;font-size:8.69px;line-height:8.69px;color:#e8e8e8;transform:scaleX(0.9450);transform-origin:left center;left:857.20px;-webkit-text-stroke:0.2px #e8e8e8;">Select</div>
<svg class="s" style="left:879.80px;top:103.00px" width="10" height="10"><polyline points="3.00,4.00 5,6.00 7.00,4.00" fill="none" stroke="#d0d0d0" stroke-width="1.1" stroke-linecap="round" stroke-linejoin="round"/></svg>
<div class="t" style="top:122.81px;font-size:8.37px;line-height:8.37px;color:#d6d6d6;transform:scaleX(0.9450);transform-origin:center center;left:797.40px;width:40px;text-align:center;-webkit-text-stroke:0.2px #d6d6d6;">Editing</div>
<div class="r" style="left:894.50px;top:66.00px;width:1.00px;height:64.00px;background:#3b3b3b;"></div>
<svg class="s" style="left:906.50px;top:67.00px" width="22" height="22" viewBox="0 0 22 22"><rect x="0.9" y="0.9" width="20.2" height="20.2" rx="1" fill="none" stroke="#d04a22" stroke-width="1.3"/><rect x="3.3" y="3.3" width="6.6" height="6.6" rx="1.2" fill="none" stroke="#d04a22" stroke-width="1.2"/><rect x="12.1" y="3.3" width="6.6" height="6.6" rx="1.2" fill="none" stroke="#d04a22" stroke-width="1.2"/><rect x="3.3" y="12.1" width="6.6" height="6.6" rx="1.2" fill="none" stroke="#d04a22" stroke-width="1.2"/><rect x="12.1" y="12.1" width="6.6" height="6.6" rx="1.2" fill="none" stroke="#d04a22" stroke-width="1.2"/></svg>
<div class="t" style="top:92.50px;font-size:9.22px;line-height:9.22px;color:#e8e8e8;transform:scaleX(0.9450);transform-origin:center center;left:893.00px;width:50px;text-align:center;-webkit-text-stroke:0.2px #e8e8e8;">Add-ins</div>
<div class="t" style="top:122.81px;font-size:8.37px;line-height:8.37px;color:#d6d6d6;transform:scaleX(0.9450);transform-origin:center center;left:892.00px;width:50px;text-align:center;-webkit-text-stroke:0.2px #d6d6d6;">Add-ins</div>
<div class="r" style="left:940.30px;top:66.00px;width:1.00px;height:64.00px;background:#3b3b3b;"></div>
<svg class="s" style="left:952.00px;top:67.00px" width="22" height="22" viewBox="0 0 22 22"><rect x="0.7" y="0.7" width="20" height="20" fill="none" stroke="#c8c8c8" stroke-width="1.1"/><line x1="0.7" y1="3.3" x2="20.7" y2="3.3" stroke="#c8c8c8" stroke-width="0.8"/><line x1="0.7" y1="13.5" x2="20.7" y2="13.5" stroke="#9a9a9a" stroke-width="0.7"/><line x1="0.7" y1="17" x2="20.7" y2="17" stroke="#9a9a9a" stroke-width="0.7"/><line x1="6.5" y1="13.5" x2="6.5" y2="20.7" stroke="#9a9a9a" stroke-width="0.7"/><line x1="13" y1="13.5" x2="13" y2="20.7" stroke="#9a9a9a" stroke-width="0.7"/><line x1="16" y1="3.3" x2="16" y2="13" stroke="#9a9a9a" stroke-width="0.7"/><circle cx="10.2" cy="9.8" r="6" fill="#282828" stroke="#d8d8d8" stroke-width="1.1"/><rect x="7.3" y="8.5" width="1.5" height="3.5" fill="#d8d8d8"/><rect x="9.2" y="7" width="1.5" height="5" fill="#d8d8d8"/><rect x="11.1" y="6.5" width="1.8" height="5.5" fill="#2f8ee8"/><line x1="14.5" y1="14.3" x2="20.2" y2="20.2" stroke="#d8d8d8" stroke-width="1.2"/></svg>
<div class="t" style="top:92.50px;font-size:9.22px;line-height:9.22px;color:#e8e8e8;transform:scaleX(0.9450);transform-origin:center center;left:938.00px;width:50px;text-align:center;-webkit-text-stroke:0.2px #e8e8e8;">Analyze</div>
<div class="t" style="top:103.80px;font-size:9.22px;line-height:9.22px;color:#e8e8e8;transform:scaleX(0.9450);transform-origin:center center;left:938.00px;width:50px;text-align:center;-webkit-text-stroke:0.2px #e8e8e8;">Data</div>
<div class="r" style="left:984.00px;top:66.00px;width:1.00px;height:64.00px;background:#3b3b3b;"></div>
<svg class="s" style="left:1032.00px;top:67.00px" width="56" height="56" viewBox="0 0 56 56"><circle cx="27.8" cy="28.1" r="27.2" fill="#ffffff"/><rect x="12.9" y="15.9" width="29.5" height="24.7" fill="#5b62ea"/><rect x="16.7" y="19.2" width="9.2" height="7.8" fill="#ffffff"/><rect x="29.2" y="19.2" width="9.7" height="7.8" fill="#ffffff"/><rect x="16.7" y="30.3" width="9.2" height="7" fill="#ffffff"/><rect x="29.2" y="30.3" width="9.7" height="7" fill="#ffffff"/></svg>
<div class="t" style="top:75.55px;font-size:22.5px;line-height:22.5px;color:#ffffff;transform:scaleX(1.0236);transform-origin:left center;font-weight:700;left:1098.30px;-webkit-text-stroke:0.7px #fff;">FINM</div>
<div class="t" style="top:75.55px;font-size:22.5px;line-height:22.5px;color:#ffffff;transform:scaleX(0.8998);transform-origin:left center;font-weight:700;left:1175.00px;-webkit-text-stroke:0.7px #fff;">DELSLAB</div>
<svg class="s" style="left:1154.00px;top:72.00px" width="22" height="24" viewBox="0 0 22 24"><path d="M7.6,8.2 A6.9,6.9 0 1 0 13.8,8.2" fill="none" stroke="#fff" stroke-width="3.6"/><line x1="10.7" y1="3.6" x2="10.7" y2="13.8" stroke="#fff" stroke-width="4.2" stroke-linecap="round"/></svg>
<div class="t" style="top:100.06px;font-size:16px;line-height:16px;color:#ececec;letter-spacing:12.1px;left:1099.30px;">Templates</div>
<svg class="s" style="left:1363.00px;top:118.50px" width="10" height="10"><polyline points="1.80,3.40 5,6.60 8.20,3.40" fill="none" stroke="#d8d8d8" stroke-width="1.1" stroke-linecap="round" stroke-linejoin="round"/></svg>
<div class="r" style="left:5.00px;top:800.00px;width:1365.00px;height:22.60px;background:#0d0d0d;"></div>
<svg class="s" style="left:20.00px;top:805.00px" width="8" height="10" viewBox="0 0 8 10"><polyline points="5.5,1.5 2,5 5.5,8.5" fill="none" stroke="#8a8a8a" stroke-width="1.1"/></svg>
<svg class="s" style="left:44.00px;top:805.00px" width="8" height="10" viewBox="0 0 8 10"><polyline points="2.5,1.5 6,5 2.5,8.5" fill="none" stroke="#8a8a8a" stroke-width="1.1"/></svg>
<div class="t" style="top:806.83px;font-size:10.6px;line-height:10.6px;color:#e4e4e4;transform:scaleX(0.9450);transform-origin:left center;letter-spacing:0.03px;left:90.60px;-webkit-text-stroke:0.2px #e4e4e4;">Contents</div>
<div class="r" style="left:0;top:0;width:992.3px;height:844px;overflow:hidden;">
<div class="r" style="left:139.70px;top:805.00px;width:1.00px;height:13.00px;background:#3a3a3a;"></div>
<div class="r" style="left:143.2px;top:802.8px;width:61.1px;height:17.2px;background:#f8ea6c;border-radius:3px;"></div>
<div class="t" style="top:807.47px;font-size:9.6px;line-height:9.6px;color:#1e1e1e;transform:scaleX(1.0269);transform-origin:center center;left:133.75px;width:80px;text-align:center;">Dashboard</div>
<div class="r" style="left:210.4px;top:802.8px;width:51.4px;height:17.2px;background:#f8ea6c;border-radius:3px;"></div>
<div class="t" style="top:807.47px;font-size:9.6px;line-height:9.6px;color:#1e1e1e;transform:scaleX(0.9738);transform-origin:center center;left:196.10px;width:80px;text-align:center;">Revenue</div>
<div class="r" style="left:268px;top:802.8px;width:75.3px;height:17.2px;background:#f8ea6c;border-radius:3px;"></div>
<div class="t" style="top:807.47px;font-size:9.6px;line-height:9.6px;color:#1e1e1e;transform:scaleX(0.9541);transform-origin:center center;left:265.65px;width:80px;text-align:center;">COGS &amp; OPEX</div>
<div class="r" style="left:349.9px;top:802.8px;width:42.8px;height:17.2px;background:#f8ea6c;border-radius:3px;"></div>
<div class="t" style="top:807.47px;font-size:9.6px;line-height:9.6px;color:#1e1e1e;left:331.30px;width:80px;text-align:center;">Payroll</div>
<div class="r" style="left:398.6px;top:799.7px;width:41.5px;height:20.6px;background:#fbf9e9;border-radius:0 0 3px 3px;"></div>
<div class="t" style="top:804.77px;font-size:9.6px;line-height:9.6px;color:#262626;transform:scaleX(0.9007);transform-origin:center center;left:389.35px;width:60px;text-align:center;">CAPEX</div>
<div class="r" style="left:404.70px;top:816.80px;width:29.30px;height:1.20px;background:#2e8b3e;"></div>
<div class="r" style="left:446.3px;top:802.8px;width:54.3px;height:17.2px;background:#f8ea6c;border-radius:3px;"></div>
<div class="t" style="top:807.47px;font-size:9.6px;line-height:9.6px;color:#1e1e1e;transform:scaleX(1.0260);transform-origin:center center;left:433.45px;width:80px;text-align:center;">CapTable</div>
<div class="r" style="left:507px;top:802.8px;width:43.2px;height:17.2px;background:#f8ea6c;border-radius:3px;"></div>
<div class="t" style="top:807.47px;font-size:9.6px;line-height:9.6px;color:#1e1e1e;left:488.60px;width:80px;text-align:center;">Capital</div>
<div class="r" style="left:556.3px;top:802.8px;width:20.1px;height:17.2px;background:#4fb4e8;border-radius:3px;"></div>
<div class="t" style="top:807.47px;font-size:9.6px;line-height:9.6px;color:#1e1e1e;left:526.35px;width:80px;text-align:center;">IS</div>
<div class="r" style="left:582.5px;top:802.8px;width:22.8px;height:17.2px;background:#4fb4e8;border-radius:3px;"></div>
<div class="t" style="top:807.47px;font-size:9.6px;line-height:9.6px;color:#1e1e1e;left:553.90px;width:80px;text-align:center;">CF</div>
<div class="r" style="left:611.9px;top:802.8px;width:22.7px;height:17.2px;background:#4fb4e8;border-radius:3px;"></div>
<div class="t" style="top:807.47px;font-size:9.6px;line-height:9.6px;color:#1e1e1e;left:583.25px;width:80px;text-align:center;">BS</div>
<div class="r" style="left:641.2px;top:802.8px;width:54.6px;height:17.2px;background:#4fb4e8;border-radius:3px;"></div>
<div class="t" style="top:807.47px;font-size:9.6px;line-height:9.6px;color:#1e1e1e;transform:scaleX(0.9749);transform-origin:center center;left:628.50px;width:80px;text-align:center;">Scenarios</div>
<div class="r" style="left:702px;top:802.8px;width:55.5px;height:17.2px;background:#4fb4e8;border-radius:3px;"></div>
<div class="t" style="top:807.47px;font-size:9.6px;line-height:9.6px;color:#1e1e1e;transform:scaleX(1.0561);transform-origin:center center;left:689.75px;width:80px;text-align:center;">Valuation</div>
<div class="r" style="left:763.6px;top:802.8px;width:54.6px;height:17.2px;background:#4fb4e8;border-radius:3px;"></div>
<div class="t" style="top:807.47px;font-size:9.6px;line-height:9.6px;color:#1e1e1e;transform:scaleX(1.0062);transform-origin:center center;left:750.90px;width:80px;text-align:center;">Summary</div>
<div class="r" style="left:824.3px;top:802.8px;width:23.2px;height:17.2px;background:#4fb4e8;border-radius:3px;"></div>
<div class="t" style="top:807.47px;font-size:9.6px;line-height:9.6px;color:#1e1e1e;left:795.90px;width:80px;text-align:center;">BE</div>
<div class="r" style="left:853.6px;top:802.8px;width:34.8px;height:17.2px;background:#4fb4e8;border-radius:3px;"></div>
<div class="t" style="top:807.47px;font-size:9.6px;line-height:9.6px;color:#1e1e1e;left:831.00px;width:80px;text-align:center;">ROIC</div>
<div class="r" style="left:894.5px;top:802.8px;width:40.3px;height:17.2px;background:#4fb4e8;border-radius:3px;"></div>
<div class="t" style="top:807.47px;font-size:9.6px;line-height:9.6px;color:#1e1e1e;transform:scaleX(0.9941);transform-origin:center center;left:874.65px;width:80px;text-align:center;">Charts</div>
<div class="r" style="left:941px;top:802.8px;width:31.0px;height:17.2px;background:#4fb4e8;border-radius:3px;"></div>
<div class="t" style="top:807.47px;font-size:9.6px;line-height:9.6px;color:#1e1e1e;left:916.50px;width:80px;text-align:center;">KPIs</div>
<div class="r" style="left:978.4px;top:802.8px;width:41.6px;height:17.2px;background:#4fb4e8;border-radius:3px;"></div>
<div class="t" style="top:807.47px;font-size:9.6px;line-height:9.6px;color:#1e1e1e;transform:scaleX(0.9749);transform-origin:left center;left:984.40px;">Scenarios</div>
</div>
<div class="r" style="left:207.00px;top:805.00px;width:1.00px;height:13.00px;background:#3a3a3a;"></div>
<div class="r" style="left:264.50px;top:805.00px;width:1.00px;height:13.00px;background:#3a3a3a;"></div>
<div class="r" style="left:346.20px;top:805.00px;width:1.00px;height:13.00px;background:#3a3a3a;"></div>
<div class="r" style="left:394.70px;top:805.00px;width:1.00px;height:13.00px;background:#3a3a3a;"></div>
<div class="r" style="left:442.70px;top:805.00px;width:1.00px;height:13.00px;background:#3a3a3a;"></div>
<div class="r" style="left:503.20px;top:805.00px;width:1.00px;height:13.00px;background:#3a3a3a;"></div>
<div class="r" style="left:552.80px;top:805.00px;width:1.00px;height:13.00px;background:#3a3a3a;"></div>
<div class="r" style="left:579.00px;top:805.00px;width:1.00px;height:13.00px;background:#3a3a3a;"></div>
<div class="r" style="left:608.10px;top:805.00px;width:1.00px;height:13.00px;background:#3a3a3a;"></div>
<div class="r" style="left:637.50px;top:805.00px;width:1.00px;height:13.00px;background:#3a3a3a;"></div>
<div class="r" style="left:698.50px;top:805.00px;width:1.00px;height:13.00px;background:#3a3a3a;"></div>
<div class="r" style="left:760.10px;top:805.00px;width:1.00px;height:13.00px;background:#3a3a3a;"></div>
<div class="r" style="left:820.80px;top:805.00px;width:1.00px;height:13.00px;background:#3a3a3a;"></div>
<div class="r" style="left:850.10px;top:805.00px;width:1.00px;height:13.00px;background:#3a3a3a;"></div>
<div class="r" style="left:891.00px;top:805.00px;width:1.00px;height:13.00px;background:#3a3a3a;"></div>
<div class="r" style="left:937.50px;top:805.00px;width:1.00px;height:13.00px;background:#3a3a3a;"></div>
<div class="r" style="left:974.70px;top:805.00px;width:1.00px;height:13.00px;background:#3a3a3a;"></div>
<div class="r" style="left:999.80px;top:810.10px;width:1.80px;height:1.80px;background:#e0e0e0;border-radius:1px;"></div>
<div class="r" style="left:1002.80px;top:810.10px;width:1.80px;height:1.80px;background:#e0e0e0;border-radius:1px;"></div>
<div class="r" style="left:1005.80px;top:810.10px;width:1.80px;height:1.80px;background:#e0e0e0;border-radius:1px;"></div>
<div class="r" style="left:1022.20px;top:810.60px;width:8.70px;height:1.00px;background:#e0e0e0;"></div>
<div class="r" style="left:1026.05px;top:806.30px;width:1.00px;height:9.60px;background:#e0e0e0;"></div>
<div class="r" style="left:1049.10px;top:805.70px;width:1.60px;height:1.60px;background:#c8c8c8;border-radius:1px;"></div>
<div class="r" style="left:1049.10px;top:809.70px;width:1.60px;height:1.60px;background:#c8c8c8;border-radius:1px;"></div>
<div class="r" style="left:1049.10px;top:813.70px;width:1.60px;height:1.60px;background:#c8c8c8;border-radius:1px;"></div>
<div class="r" style="left:1062.00px;top:805.00px;width:308.00px;height:12.50px;background:#151515;"></div>
<svg class="s" style="left:1063.00px;top:806.00px" width="8" height="10" viewBox="0 0 8 10"><polygon points="2,5 6.5,1.5 6.5,8.5" fill="#8a8a8a"/></svg>
<div class="r" style="left:1073.50px;top:807.50px;width:26.70px;height:6.80px;background:#8c8c8c;border-radius:3.5px;"></div>
<svg class="s" style="left:1361.00px;top:806.50px" width="8" height="10" viewBox="0 0 8 10"><polygon points="6.2,5 1.5,1.5 1.5,8.5" fill="#8a8a8a"/></svg>
<div class="r" style="left:5.00px;top:822.60px;width:1380.00px;height:16.40px;background:#181818;"></div>
<div class="r" style="left:5.00px;top:822.60px;width:1380.00px;height:0.80px;background:#2a2a2a;"></div>
<div class="t" style="top:827.84px;font-size:7.63px;line-height:7.63px;color:#cfcfcf;transform:scaleX(0.9450);transform-origin:left center;letter-spacing:0.05px;left:12.70px;-webkit-text-stroke:0.2px #cfcfcf;">Ready</div>
<svg class="s" style="left:46.00px;top:825.50px" width="13" height="12" viewBox="0 0 13 12"><rect x="0.8" y="1" width="9" height="9" fill="none" stroke="#bdbdbd" stroke-width="0.9"/><line x1="0.8" y1="3" x2="9.8" y2="3" stroke="#bdbdbd" stroke-width="0.8"/><circle cx="8" cy="7.8" r="3.5" fill="#181818" stroke="#d0d0d0" stroke-width="0.9"/><circle cx="8" cy="7.8" r="1.2" fill="#d0d0d0"/></svg>
<svg class="s" style="left:69.50px;top:825.00px" width="12" height="13" viewBox="0 0 12 13"><circle cx="5.5" cy="1.8" r="1.4" fill="none" stroke="#d0d0d0" stroke-width="0.8"/><path d="M1,4 H10 M5.5,4 V7.5 L3,11.5 M5.5,7.5 L6.5,9" fill="none" stroke="#d0d0d0" stroke-width="0.9"/><path d="M7,9 L11,12.5 M11,9 L7,12.5" stroke="#d0d0d0" stroke-width="0.9"/></svg>
<div class="t" style="top:827.57px;font-size:7.95px;line-height:7.95px;color:#f0f0f0;transform:scaleX(0.9450);transform-origin:left center;font-weight:700;left:83.00px;-webkit-text-stroke:0.2px #f0f0f0;">Accessibility: Investigate</div>
<div class="r" style="left:1171.30px;top:823.40px;width:28.20px;height:15.60px;background:#2a2a2a;"></div>
<svg class="s" style="left:1179.50px;top:825.50px" width="13" height="12" viewBox="0 0 13 12"><rect x="0.6" y="0.6" width="11" height="10.5" fill="none" stroke="#e0e0e0" stroke-width="1"/><line x1="4.3" y1="0.6" x2="4.3" y2="11" stroke="#e0e0e0" stroke-width="0.9"/><line x1="8" y1="0.6" x2="8" y2="11" stroke="#e0e0e0" stroke-width="0.9"/><line x1="0.6" y1="4.1" x2="11.6" y2="4.1" stroke="#e0e0e0" stroke-width="0.9"/><line x1="0.6" y1="7.6" x2="11.6" y2="7.6" stroke="#e0e0e0" stroke-width="0.9"/></svg>
<svg class="s" style="left:1208.30px;top:825.50px" width="13" height="12" viewBox="0 0 13 12"><rect x="0.6" y="0.6" width="11" height="10.5" fill="none" stroke="#d0d0d0" stroke-width="1"/><rect x="3" y="2.5" width="6.2" height="6.8" fill="none" stroke="#d0d0d0" stroke-width="0.9"/></svg>
<svg class="s" style="left:1237.00px;top:825.50px" width="13" height="12" viewBox="0 0 13 12"><rect x="0.6" y="0.6" width="11" height="10.5" fill="none" stroke="#d0d0d0" stroke-width="1"/><path d="M3,0.6 V7 H8.5 V0.6" fill="none" stroke="#d0d0d0" stroke-width="0.9"/></svg>
<div class="r" style="left:1262.00px;top:830.60px;width:4.50px;height:0.80px;background:#a0a0a0;"></div>
<div class="r" style="left:1270.60px;top:830.50px;width:71.10px;height:1.00px;background:#8a8a8a;"></div>
<div class="r" style="left:1306.60px;top:828.50px;width:0.80px;height:5.00px;background:#8a8a8a;"></div>
<div class="r" style="left:1309.30px;top:826.80px;width:4.00px;height:8.50px;background:#b0b0b0;border-radius:1px;"></div>
<div class="r" style="left:1345.50px;top:830.60px;width:5.50px;height:0.80px;background:#a0a0a0;"></div>
<div class="r" style="left:1347.85px;top:828.20px;width:0.80px;height:5.60px;background:#a0a0a0;"></div>
<div class="t" style="top:827.57px;font-size:7.95px;line-height:7.95px;color:#d8d8d8;transform:scaleX(0.9450);transform-origin:left center;left:1359.80px;-webkit-text-stroke:0.2px #d8d8d8;">140%</div>
</body></html>
